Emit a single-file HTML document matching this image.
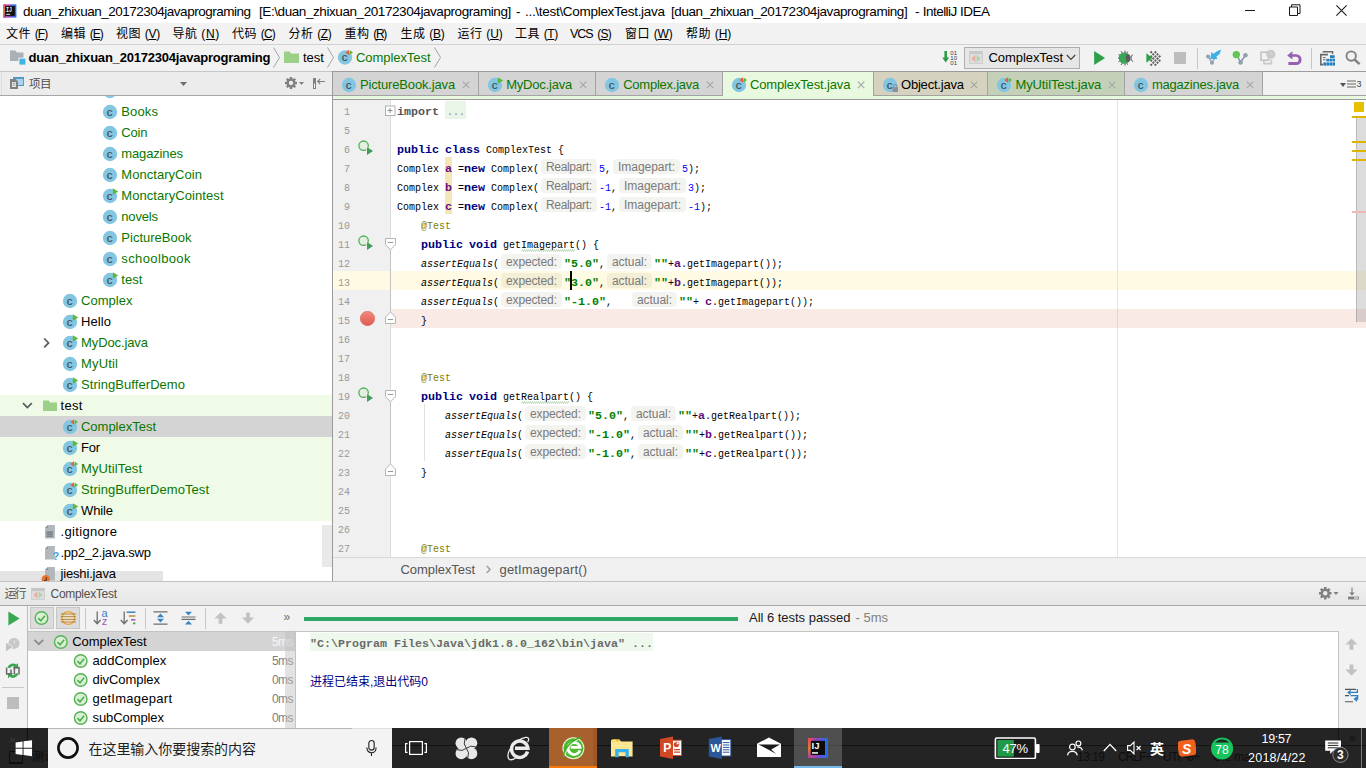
<!DOCTYPE html>
<html lang="zh-CN"><head><meta charset="utf-8"><title>IntelliJ IDEA - ComplexTest.java</title>
<style>
html,body{margin:0;padding:0;}
body{width:1366px;height:768px;overflow:hidden;background:#f2f2f2;position:relative;
 font-family:"Liberation Sans","Noto Sans CJK SC",sans-serif;font-size:13px;color:#000;}
#app{position:absolute;left:0;top:0;width:1366px;height:768px;overflow:hidden;}
#app div,#app span,#app svg{position:absolute;}
#app span{white-space:pre;}
#app span.c{font-family:"Liberation Mono","Noto Sans CJK SC",monospace;transform-origin:0 0;}
#app u{text-decoration:underline;text-underline-offset:1px;}
</style></head>
<body><div id="app">
<div style="left:0px;top:0px;width:1366px;height:23px;background:#ffffff;"></div>
<svg style="left:3px;top:4px;" width="14" height="14" viewBox="-0.4 -0.4 14 14"><defs><linearGradient id="ijg" x1="0" y1="0" x2="1" y2="0"><stop offset="0" stop-color="#f03e6a"/><stop offset="0.45" stop-color="#8a46c8"/><stop offset="1" stop-color="#1673ee"/></linearGradient><linearGradient id="ijh" x1="0" y1="0" x2="0" y2="1"><stop offset="0" stop-color="#f03e6a"/><stop offset="0.5" stop-color="#e07b28"/><stop offset="1" stop-color="#a041b0"/></linearGradient></defs><rect x="0" y="0" width="13" height="13.2" fill="url(#ijg)"/><rect x="0" y="0" width="2.6" height="13.2" fill="url(#ijh)"/><rect x="1.7" y="1.7" width="9.8" height="9.8" fill="#0f0f0f"/><rect x="2.8" y="9.4" width="4" height="1" fill="#e8e8e8"/><text x="2.5" y="7.7" font-family="Liberation Mono,monospace" font-weight="700" font-size="6.4" fill="#f2f2f2" textLength="6" lengthAdjust="spacingAndGlyphs">IJ</text></svg>
<span style="left:23px;top:3.25px;line-height:17.5px;font-size:13.5px;letter-spacing:-0.491px;">duan_zhixuan_20172304javaprograming </span>
<span style="left:259px;top:3.25px;line-height:17.5px;font-size:13.5px;letter-spacing:-0.421px;">[E:\duan_zhixuan_20172304javaprograming] </span>
<span style="left:516px;top:3.25px;line-height:17.5px;font-size:13.5px;letter-spacing:-0.500px;">- </span>
<span style="left:525px;top:3.25px;line-height:17.5px;font-size:13.5px;letter-spacing:-0.294px;">...\test\ComplexTest.java </span>
<span style="left:671px;top:3.25px;line-height:17.5px;font-size:13.5px;letter-spacing:-0.431px;">[duan_zhixuan_20172304javaprograming] </span>
<span style="left:915px;top:3.25px;line-height:17.5px;font-size:13.5px;">- </span>
<span style="left:922.7px;top:3.25px;line-height:17.5px;font-size:13.5px;letter-spacing:-0.519px;">IntelliJ IDEA</span>
<div style="left:1245px;top:10px;width:10px;height:1px;background:#1a1a1a;"></div>
<svg style="left:1289px;top:4px;" width="12" height="12" viewBox="0 0 12 12"><path d="M0.5 3 h8 v8.5 h-8 Z" fill="none" stroke="#1a1a1a" stroke-width="1"/><path d="M2.5 3 V0.8 h8.5 V9.5 H8.5" fill="none" stroke="#1a1a1a" stroke-width="1"/></svg>
<svg style="left:1336px;top:5px;" width="11" height="11" viewBox="0 0 11 11"><path d="M0.4 0.4 L10.6 10.6 M10.6 0.4 L0.4 10.6" stroke="#1a1a1a" stroke-width="1.1" fill="none"/></svg>
<div style="left:0px;top:23px;width:1366px;height:22px;background:#f2f2f2;"></div>
<span style="left:6px;top:26.3px;line-height:16px;font-size:12px;letter-spacing:0.584px;">文件 </span>
<span style="left:34.7px;top:26.3px;line-height:16px;font-size:12px;letter-spacing:-0.864px;">(<u>F</u>)</span>
<span style="left:61px;top:26.3px;line-height:16px;font-size:12px;letter-spacing:0.584px;">编辑 </span>
<span style="left:89.7px;top:26.3px;line-height:16px;font-size:12px;letter-spacing:-0.950px;">(<u>E</u>)</span>
<span style="left:116px;top:26.3px;line-height:16px;font-size:12px;letter-spacing:0.584px;">视图 </span>
<span style="left:144.7px;top:26.3px;line-height:16px;font-size:12px;letter-spacing:-0.200px;">(<u>V</u>)</span>
<span style="left:172.5px;top:26.3px;line-height:16px;font-size:12px;letter-spacing:0.584px;">导航 </span>
<span style="left:201.2px;top:26.3px;line-height:16px;font-size:12px;letter-spacing:0.714px;">(<u>N</u>)</span>
<span style="left:232px;top:26.3px;line-height:16px;font-size:12px;letter-spacing:0.584px;">代码 </span>
<span style="left:260.7px;top:26.3px;line-height:16px;font-size:12px;letter-spacing:-0.786px;">(<u>C</u>)</span>
<span style="left:288.5px;top:26.3px;line-height:16px;font-size:12px;letter-spacing:0.584px;">分析 </span>
<span style="left:317.2px;top:26.3px;line-height:16px;font-size:12px;letter-spacing:-0.364px;">(<u>Z</u>)</span>
<span style="left:344.5px;top:26.3px;line-height:16px;font-size:12px;letter-spacing:0.584px;">重构 </span>
<span style="left:373.2px;top:26.3px;line-height:16px;font-size:12px;letter-spacing:-1.286px;">(<u>R</u>)</span>
<span style="left:400.5px;top:26.3px;line-height:16px;font-size:12px;letter-spacing:0.584px;">生成 </span>
<span style="left:429.2px;top:26.3px;line-height:16px;font-size:12px;letter-spacing:-0.200px;">(<u>B</u>)</span>
<span style="left:457.5px;top:26.3px;line-height:16px;font-size:12px;letter-spacing:0.584px;">运行 </span>
<span style="left:486.2px;top:26.3px;line-height:16px;font-size:12px;letter-spacing:-0.036px;">(<u>U</u>)</span>
<span style="left:515px;top:26.3px;line-height:16px;font-size:12px;letter-spacing:0.584px;">工具 </span>
<span style="left:543.7px;top:26.3px;line-height:16px;font-size:12px;letter-spacing:-0.364px;">(<u>T</u>)</span>
<span style="left:570px;top:26.05px;line-height:16.5px;font-size:12.5px;letter-spacing:-1.052px;">VCS </span>
<span style="left:597.3px;top:26.3px;line-height:16px;font-size:12px;letter-spacing:-0.750px;">(<u>S</u>)</span>
<span style="left:625px;top:26.3px;line-height:16px;font-size:12px;letter-spacing:0.584px;">窗口 </span>
<span style="left:653.7px;top:26.3px;line-height:16px;font-size:12px;letter-spacing:-0.114px;">(<u>W</u>)</span>
<span style="left:686px;top:26.3px;line-height:16px;font-size:12px;letter-spacing:0.584px;">帮助 </span>
<span style="left:714.7px;top:26.3px;line-height:16px;font-size:12px;letter-spacing:-0.036px;">(<u>H</u>)</span>
<div style="left:0px;top:44px;width:1366px;height:1px;background:#d1d1d1;"></div>
<div style="left:0px;top:45px;width:1366px;height:26px;background:#f2f2f2;"></div>
<svg style="left:10px;top:50px;" width="16" height="15" viewBox="0 0 16 15"><path d="M0 0.5 h5.4 l1.6 2 H13.5 V11 H0 Z" fill="#aab0b6"/><rect x="8.4" y="7.6" width="7" height="7" fill="#f2f2f2"/><rect x="9.4" y="8.6" width="6" height="6" fill="#40b6e0"/></svg>
<span style="left:28.5px;top:49.0px;line-height:17px;font-size:13px;font-weight:700;letter-spacing:-0.214px;">duan_zhixuan_20172304javaprograming</span>
<svg style="left:273px;top:47px;" width="7" height="21" viewBox="0 0 7 21"><path d="M0.5 0.5 L6.5 10.5 L0.5 20.5" fill="none" stroke="#a3a3a3" stroke-width="1"/></svg>
<svg style="left:284px;top:51px;" width="15" height="12" viewBox="0 0 15 12"><path d="M0 0.5 h5.6 l1.6 2 H15 V12 H0 Z" fill="#9cd088"/></svg>
<span style="left:303px;top:49.0px;line-height:17px;font-size:13px;letter-spacing:0.010px;">test</span>
<svg style="left:327px;top:47px;" width="7" height="21" viewBox="0 0 7 21"><path d="M0.5 0.5 L6.5 10.5 L0.5 20.5" fill="none" stroke="#a3a3a3" stroke-width="1"/></svg>
<svg style="left:337px;top:48px;" width="17" height="18" viewBox="0 -0.5 17 18"><circle cx="8" cy="9" r="7.15" fill="#83c6e2"/><text x="7.7" y="12.6" text-anchor="middle" font-family="Liberation Sans,sans-serif" font-weight="400" font-size="11.5" stroke="#3f4a54" stroke-width="0.2" fill="#3f4a54">c</text><path d="M12.6 1.4 L12.6 6.6 L16 4 Z" fill="#5ab83c"/><path d="M12 1.2 L12 6.8 L8.4 4 Z" fill="#e8603c"/></svg>
<span style="left:356px;top:49.0px;line-height:17px;font-size:13px;color:#0a7700;letter-spacing:-0.064px;">ComplexTest</span>
<svg style="left:434px;top:47px;" width="7" height="21" viewBox="0 0 7 21"><path d="M0.5 0.5 L6.5 10.5 L0.5 20.5" fill="none" stroke="#a3a3a3" stroke-width="1"/></svg>
<svg style="left:942px;top:51px;" width="8" height="12" viewBox="-0.2 0 8 12"><path d="M2.2 0 h2.6 v6.4 h2.2 L3.5 11.6 L0 6.4 h2.2 Z" fill="#2f9a4a"/></svg>
<span style="left:950.3px;top:49.5px;line-height:6px;font-size:6px;color:#3c3c3c;font-family:"Liberation Mono","Noto Sans CJK SC",monospace;letter-spacing:-0.203px;">01</span>
<span style="left:950.3px;top:54.5px;line-height:6px;font-size:6px;color:#3c3c3c;font-family:"Liberation Mono","Noto Sans CJK SC",monospace;letter-spacing:-0.203px;">10</span>
<span style="left:950.3px;top:59.5px;line-height:6px;font-size:6px;color:#3c3c3c;font-family:"Liberation Mono","Noto Sans CJK SC",monospace;letter-spacing:-0.203px;">01</span>
<div style="left:964px;top:47px;width:116px;height:22px;background:#e6e6e6;border:1px solid #adadad;box-sizing:border-box;"></div>
<div style="left:969px;top:51px;width:14px;height:13px;background:#dcdcdc;border:1px solid #cfcfcf;border-top:3px solid #c9c9c9;box-sizing:border-box;"></div>
<svg style="left:971px;top:54px;" width="10" height="9" viewBox="0 -0.5 10 9"><path d="M4.4 0.6 V7.4 L0.4 4 Z" fill="#efaaa0"/><path d="M5.6 0.6 V7.4 L9.6 4 Z" fill="#a9d6a9"/></svg>
<span style="left:988.5px;top:49.0px;line-height:17px;font-size:13px;letter-spacing:-0.064px;">ComplexTest</span>
<svg style="left:1066px;top:54px;" width="10" height="7" viewBox="0 0 10 7"><path d="M0.8 1 L5 5.4 L9.2 1" fill="none" stroke="#444" stroke-width="1.2"/></svg>
<svg style="left:1093px;top:50px;" width="14" height="16" viewBox="-0.5 -0.5 14 16"><path d="M0.6 0.6 L11.6 7.5 L0.6 14.4 Z" fill="#2fa04a"/></svg>
<svg style="left:1118px;top:50px;" width="16" height="16" viewBox="0 0 16 16"><path d="M3 1.2 L4.8 3.6 M7 0.6 V3 M0.6 4.6 L2.6 5.8 M0 8 H1.6 M0.6 11.6 L2.6 10.4 M3 15 L4.8 12.6 M7 15.6 V13.2 M9.6 1.6 L8.6 3.4 M9.6 14.6 L8.6 12.8" stroke="#555" stroke-width="1" fill="none"/><path d="M9.8 3.6 A5.6 5.4 0 1 0 9.8 12.6 A6.4 6.4 0 0 1 9.8 3.6 Z" fill="#3aa655"/><ellipse cx="5.4" cy="8.1" rx="4.6" ry="5.3" fill="#3aa655"/><path d="M9.6 3.4 A6.6 6.6 0 0 0 9.6 12.8 A7 5 0 0 0 12.6 8.1 A7 5 0 0 0 9.6 3.4 Z" fill="#5d5d5d"/><path d="M14.8 4.6 A4.4 4.4 0 0 0 14.8 11.6" stroke="#777" stroke-width="1.1" fill="none"/></svg>
<svg style="left:1146px;top:50px;" width="16" height="16" viewBox="0 0 16 16"><g fill="#5f5f5f"><rect x="4.2" y="1.2" width="2" height="2" transform="rotate(45 5.2 2.2)"/><rect x="4.2" y="5.4" width="2" height="2" transform="rotate(45 5.2 6.4)"/><rect x="4.2" y="9.6" width="2" height="2" transform="rotate(45 5.2 10.6)"/><rect x="4.2" y="13.8" width="2" height="2" transform="rotate(45 5.2 14.8)"/><rect x="6.3" y="3.3" width="2" height="2" transform="rotate(45 7.3 4.3)"/><rect x="6.3" y="7.5" width="2" height="2" transform="rotate(45 7.3 8.5)"/><rect x="6.3" y="11.7" width="2" height="2" transform="rotate(45 7.3 12.7)"/><rect x="8.4" y="1.2" width="2" height="2" transform="rotate(45 9.4 2.2)"/><rect x="8.4" y="5.4" width="2" height="2" transform="rotate(45 9.4 6.4)"/><rect x="8.4" y="9.6" width="2" height="2" transform="rotate(45 9.4 10.6)"/><rect x="8.4" y="13.8" width="2" height="2" transform="rotate(45 9.4 14.8)"/><rect x="10.5" y="3.3" width="2" height="2" transform="rotate(45 11.5 4.3)"/><rect x="10.5" y="7.5" width="2" height="2" transform="rotate(45 11.5 8.5)"/><rect x="10.5" y="11.7" width="2" height="2" transform="rotate(45 11.5 12.7)"/><rect x="12.6" y="5.4" width="2" height="2" transform="rotate(45 13.6 6.4)"/><rect x="12.6" y="9.6" width="2" height="2" transform="rotate(45 13.6 10.6)"/></g><path d="M0.4 3.2 L6.4 8 L0.4 12.8 Z" fill="#2fa04a"/></svg>
<div style="left:1174px;top:52px;width:12px;height:12px;background:#bdbdbd;"></div>
<div style="left:1197px;top:48px;width:1px;height:21px;background:#c4c4c4;"></div>
<svg style="left:1205px;top:49px;" width="17" height="17" viewBox="0 0 17 17"><path d="M3.2 7.6 L7 13.6 L10 9" stroke="#8fa1b0" stroke-width="1.3" fill="none"/><circle cx="3" cy="7.6" r="2" fill="#8fa1b0"/><circle cx="7" cy="13.8" r="2" fill="#8fa1b0"/><path d="M16.2 0.6 L14.6 5 L11.4 7.4 L12.4 10 L5.2 10 L6.4 3 L8.6 4.8 L11.6 2.4 Z" fill="#3fb0e4"/></svg>
<svg style="left:1232px;top:49px;" width="17" height="17" viewBox="0 0 17 17"><path d="M4.6 6 L8.6 13 L13.4 6.4" stroke="#7f93a3" stroke-width="1.5" fill="none"/><circle cx="4.3" cy="5.6" r="3.7" fill="#62c554"/><circle cx="13.4" cy="6.3" r="2.3" fill="#8fa1b0"/><circle cx="8.6" cy="13.4" r="2.3" fill="#8fa1b0"/></svg>
<svg style="left:1260px;top:49px;" width="17" height="17" viewBox="0 0 17 17"><rect x="1" y="3.2" width="7.6" height="8" fill="none" stroke="#c2c2c2" stroke-width="1.6"/><path d="M4 11.6 V14.6 H11.4 V10.4" stroke="#c8c8c8" stroke-width="1.6" fill="none"/><circle cx="10.8" cy="5.2" r="4.5" fill="#c9c9c9"/><path d="M10.8 2.4 V5.2 h2.4" stroke="#dedede" stroke-width="0.9" fill="none"/></svg>
<svg style="left:1287px;top:51px;" width="15" height="15" viewBox="0 0 15 15"><path d="M5.4 0.2 L0.2 4.4 L5.4 8.6 V5.8 H9 a2.6 2.6 0 0 1 0 5.2 H1.4 V14 H9.2 a5.4 5.4 0 0 0 0 -10.8 H5.4 Z" fill="#9460b4"/></svg>
<div style="left:1311px;top:48px;width:1px;height:21px;background:#c4c4c4;"></div>
<svg style="left:1320px;top:50px;" width="15" height="17" viewBox="0 0 15 17"><path d="M2.6 1.8 H12.6 V4" fill="none" stroke="#6a6a6a" stroke-width="1.4"/><path d="M8 4.6 H0.8 V14.6 H3" fill="none" stroke="#6a6a6a" stroke-width="1.6"/><path d="M3 7.6 H5.6 M3 9.8 H5.6" stroke="#555" stroke-width="0.9"/><g fill="#1f7fc0"><rect x="10" y="5.2" width="4.6" height="3"/><rect x="6.4" y="8.8" width="2.6" height="2.6"/><rect x="9.4" y="8.8" width="2.6" height="2.6"/><rect x="12.4" y="8.8" width="2.6" height="2.6"/><rect x="3.4" y="12.4" width="2.6" height="3.2"/><rect x="6.4" y="12.4" width="2.6" height="3.2"/><rect x="9.4" y="12.4" width="2.6" height="3.2"/><rect x="12.4" y="12.4" width="2.6" height="3.2"/></g></svg>
<svg style="left:1345px;top:50px;" width="16" height="16" viewBox="0 0 16 16"><circle cx="6.2" cy="6.1" r="4.7" fill="none" stroke="#808080" stroke-width="1.9"/><path d="M9.6 9.6 L14.6 14.2" stroke="#808080" stroke-width="2.4"/></svg>
<div style="left:0px;top:71px;width:332px;height:1px;background:#c6c6c6;"></div>
<div style="left:332px;top:71px;width:1034px;height:1px;background:#9b9b9b;"></div>
<div style="left:0px;top:72px;width:332px;height:23px;background:#ececec;"></div>
<div style="left:1px;top:72px;width:1px;height:23px;background:#dcdcdc;"></div>
<svg style="left:10px;top:77px;" width="14" height="12" viewBox="0 0 14 12"><rect x="3.6" y="0.5" width="10" height="8" fill="#a9d5ef" stroke="#4d9bc6" stroke-width="1"/><rect x="3.6" y="0.4" width="10" height="1.6" fill="#4d9bc6"/><path d="M0 2 H5.6 L8 4.4 V12 H0 Z" fill="#808080"/><path d="M2.2 5 H5.8 V10 H2.2 Z" fill="#f4f4f4"/><path d="M3 6.2 H5 M3 8.2 H5" stroke="#808080" stroke-width="0.9"/></svg>
<span style="left:29px;top:76.85px;line-height:15.5px;font-size:11.5px;color:#4d4d4d;letter-spacing:-0.500px;">项目</span>
<svg style="left:180px;top:82px;" width="7" height="4" viewBox="0 0 7 4"><path d="M0 0 H7 L3.5 4 Z" fill="#6e6e6e"/></svg>
<svg style="left:285px;top:77px;" width="12" height="12" viewBox="0 0 12 12"><line x1="9.60" y1="6.00" x2="12.00" y2="6.00" stroke="#808080" stroke-width="2.40"/><line x1="8.55" y1="8.55" x2="10.24" y2="10.24" stroke="#808080" stroke-width="2.40"/><line x1="6.00" y1="9.60" x2="6.00" y2="12.00" stroke="#808080" stroke-width="2.40"/><line x1="3.45" y1="8.55" x2="1.76" y2="10.24" stroke="#808080" stroke-width="2.40"/><line x1="2.40" y1="6.00" x2="0.00" y2="6.00" stroke="#808080" stroke-width="2.40"/><line x1="3.45" y1="3.45" x2="1.76" y2="1.76" stroke="#808080" stroke-width="2.40"/><line x1="6.00" y1="2.40" x2="6.00" y2="0.00" stroke="#808080" stroke-width="2.40"/><line x1="8.55" y1="3.45" x2="10.24" y2="1.76" stroke="#808080" stroke-width="2.40"/><circle cx="6.0" cy="6.0" r="3.36" fill="none" stroke="#808080" stroke-width="2.40"/></svg>
<svg style="left:299px;top:82px;" width="5" height="3" viewBox="0 0 5 3"><path d="M0 0 H5 L2.5 3 Z" fill="#808080"/></svg>
<svg style="left:313px;top:78px;" width="14" height="12" viewBox="0 0 14 12"><rect x="0" y="0" width="3" height="11" fill="#808080"/><rect x="1" y="5.6" width="1" height="4.4" fill="#f4f4f4"/><path d="M4.6 3.5 H12 M7.2 1 L4.6 3.5 L7.2 6" fill="none" stroke="#808080" stroke-width="1.1"/></svg>
<div style="left:0px;top:95px;width:332px;height:1px;background:#a6a6a6;"></div>
<div style="left:333px;top:72px;width:1033px;height:23px;background:#f2f2f2;"></div>
<div style="left:333px;top:72px;width:146px;height:23px;background:#d4d4d4;"></div>
<div style="left:478px;top:72px;width:1px;height:23px;background:#a3a3a3;"></div>
<svg style="left:341px;top:76px;" width="17" height="17" viewBox="0 0 17 17"><circle cx="8" cy="9" r="7.15" fill="#83c6e2"/><text x="7.7" y="12.6" text-anchor="middle" font-family="Liberation Sans,sans-serif" font-weight="400" font-size="11.5" stroke="#3f4a54" stroke-width="0.2" fill="#3f4a54">c</text></svg>
<span style="left:360px;top:76.0px;line-height:17px;font-size:13px;color:#0a7700;letter-spacing:-0.158px;">PictureBook.java</span>
<svg style="left:462px;top:81px;" width="8" height="8" viewBox="-0.4 -0.2 8 8"><path d="M0.5 0.5 L6.9 6.9 M6.9 0.5 L0.5 6.9" fill="none" stroke="#a3a8a6" stroke-width="1.1"/></svg>
<div style="left:479px;top:72px;width:117px;height:23px;background:#d4d4d4;"></div>
<div style="left:595px;top:72px;width:1px;height:23px;background:#a3a3a3;"></div>
<svg style="left:487px;top:76px;" width="17" height="17" viewBox="0 0 17 17"><circle cx="8" cy="9" r="7.15" fill="#83c6e2"/><text x="7.7" y="12.6" text-anchor="middle" font-family="Liberation Sans,sans-serif" font-weight="400" font-size="11.5" stroke="#3f4a54" stroke-width="0.2" fill="#3f4a54">c</text><path d="M9.5 0.5 L9.5 8 L15.5 4.2 Z" fill="#f2f2f2" fill-opacity="0"/><path d="M10.8 1.2 L10.8 7.8 L16.2 4.5 Z" fill="#5ab83c"/></svg>
<span style="left:506.2px;top:76.0px;line-height:17px;font-size:13px;color:#0a7700;letter-spacing:-0.214px;">MyDoc.java</span>
<svg style="left:579px;top:81px;" width="8" height="8" viewBox="-0.4 -0.2 8 8"><path d="M0.5 0.5 L6.9 6.9 M6.9 0.5 L0.5 6.9" fill="none" stroke="#a3a8a6" stroke-width="1.1"/></svg>
<div style="left:596px;top:72px;width:127px;height:23px;background:#d4d4d4;"></div>
<div style="left:722px;top:72px;width:1px;height:23px;background:#a3a3a3;"></div>
<svg style="left:604px;top:76px;" width="17" height="17" viewBox="0 0 17 17"><circle cx="8" cy="9" r="7.15" fill="#83c6e2"/><text x="7.7" y="12.6" text-anchor="middle" font-family="Liberation Sans,sans-serif" font-weight="400" font-size="11.5" stroke="#3f4a54" stroke-width="0.2" fill="#3f4a54">c</text></svg>
<span style="left:623.2px;top:76.0px;line-height:17px;font-size:13px;color:#0a7700;letter-spacing:-0.242px;">Complex.java</span>
<svg style="left:706px;top:81px;" width="8" height="8" viewBox="-0.4 -0.2 8 8"><path d="M0.5 0.5 L6.9 6.9 M6.9 0.5 L0.5 6.9" fill="none" stroke="#a3a8a6" stroke-width="1.1"/></svg>
<div style="left:723px;top:72px;width:151px;height:23px;background:#e9f9df;"></div>
<div style="left:873px;top:72px;width:1px;height:23px;background:#a3a3a3;"></div>
<svg style="left:731px;top:76px;" width="17" height="17" viewBox="0 0 17 17"><circle cx="8" cy="9" r="7.15" fill="#83c6e2"/><text x="7.7" y="12.6" text-anchor="middle" font-family="Liberation Sans,sans-serif" font-weight="400" font-size="11.5" stroke="#3f4a54" stroke-width="0.2" fill="#3f4a54">c</text><path d="M12.6 1.4 L12.6 6.6 L16 4 Z" fill="#5ab83c"/><path d="M12 1.2 L12 6.8 L8.4 4 Z" fill="#e8603c"/></svg>
<span style="left:750px;top:76.0px;line-height:17px;font-size:13px;color:#0a7700;letter-spacing:-0.147px;">ComplexTest.java</span>
<svg style="left:857px;top:81px;" width="8" height="8" viewBox="-0.4 -0.2 8 8"><path d="M0.5 0.5 L6.9 6.9 M6.9 0.5 L0.5 6.9" fill="none" stroke="#a3a8a6" stroke-width="1.1"/></svg>
<div style="left:874px;top:72px;width:114px;height:23px;background:#d5d3bf;"></div>
<div style="left:987px;top:72px;width:1px;height:23px;background:#a3a3a3;"></div>
<svg style="left:882px;top:76px;" width="17" height="17" viewBox="0 0 17 17"><circle cx="8" cy="9" r="7.15" fill="#83c6e2"/><text x="7.7" y="12.6" text-anchor="middle" font-family="Liberation Sans,sans-serif" font-weight="400" font-size="11.5" stroke="#3f4a54" stroke-width="0.2" fill="#3f4a54">c</text><rect x="10.5" y="11.2" width="5.5" height="4.8" fill="#8a8f99"/><path d="M11.6 11.4 v-1.3 a1.65 1.65 0 0 1 3.3 0 v1.3" fill="none" stroke="#8a8f99" stroke-width="1.1"/></svg>
<span style="left:901px;top:76.0px;line-height:17px;font-size:13px;letter-spacing:-0.205px;">Object.java</span>
<svg style="left:970px;top:81px;" width="8" height="8" viewBox="-0.4 -0.2 8 8"><path d="M0.5 0.5 L6.9 6.9 M6.9 0.5 L0.5 6.9" fill="none" stroke="#a3a8a6" stroke-width="1.1"/></svg>
<div style="left:988px;top:72px;width:137px;height:23px;background:#c4d0b8;"></div>
<div style="left:1124px;top:72px;width:1px;height:23px;background:#a3a3a3;"></div>
<svg style="left:996px;top:76px;" width="17" height="17" viewBox="0 0 17 17"><circle cx="8" cy="9" r="7.15" fill="#83c6e2"/><text x="7.7" y="12.6" text-anchor="middle" font-family="Liberation Sans,sans-serif" font-weight="400" font-size="11.5" stroke="#3f4a54" stroke-width="0.2" fill="#3f4a54">c</text><path d="M12.6 1.4 L12.6 6.6 L16 4 Z" fill="#5ab83c"/><path d="M12 1.2 L12 6.8 L8.4 4 Z" fill="#e8603c"/></svg>
<span style="left:1015.5px;top:76.0px;line-height:17px;font-size:13px;color:#0a7700;letter-spacing:-0.116px;">MyUtilTest.java</span>
<svg style="left:1108px;top:81px;" width="8" height="8" viewBox="-0.4 -0.2 8 8"><path d="M0.5 0.5 L6.9 6.9 M6.9 0.5 L0.5 6.9" fill="none" stroke="#a3a8a6" stroke-width="1.1"/></svg>
<div style="left:1125px;top:72px;width:138px;height:23px;background:#d4d4d4;"></div>
<div style="left:1262px;top:72px;width:1px;height:23px;background:#a3a3a3;"></div>
<svg style="left:1133px;top:76px;" width="17" height="17" viewBox="0 0 17 17"><circle cx="8" cy="9" r="7.15" fill="#83c6e2"/><text x="7.7" y="12.6" text-anchor="middle" font-family="Liberation Sans,sans-serif" font-weight="400" font-size="11.5" stroke="#3f4a54" stroke-width="0.2" fill="#3f4a54">c</text></svg>
<span style="left:1152px;top:76.0px;line-height:17px;font-size:13px;color:#0a7700;letter-spacing:-0.233px;">magazines.java</span>
<svg style="left:1246px;top:81px;" width="8" height="8" viewBox="-0.4 -0.2 8 8"><path d="M0.5 0.5 L6.9 6.9 M6.9 0.5 L0.5 6.9" fill="none" stroke="#a3a8a6" stroke-width="1.1"/></svg>
<svg style="left:1340px;top:83px;" width="6" height="4" viewBox="0 0 6 4"><path d="M0 0 H6 L3.0 4 Z" fill="#555"/></svg>
<svg style="left:1347px;top:80px;" width="9" height="9" viewBox="0 0 9 9"><path d="M0 1 H9 M0 4 H9 M0 7 H9" stroke="#666" stroke-width="1"/></svg>
<span style="left:1356.5px;top:78.0px;line-height:13px;font-size:9px;color:#444;letter-spacing:-0.516px;">3</span>
<div style="left:333px;top:95px;width:1033px;height:1px;background:#a3a3a3;"></div>
<div style="left:723px;top:95px;width:150px;height:1px;background:#e9f9df;"></div>
<div style="left:333px;top:96px;width:1033px;height:3px;background:#e9f9df;"></div>
<div style="left:333px;top:99px;width:1033px;height:1px;background:#9b9b9b;"></div>
<div style="left:0px;top:96px;width:332px;height:485px;background:#ffffff;overflow:hidden;"></div>
<div style="left:332px;top:72px;width:1px;height:509px;background:#9b9b9b;"></div>
<div style="left:0;top:96px;width:332px;height:4px;overflow:hidden"><svg style="left:102px;top:-14px;" width="17" height="17" viewBox="0 0 17 17"><circle cx="8" cy="9" r="7.15" fill="#83c6e2"/><text x="7.7" y="12.6" text-anchor="middle" font-family="Liberation Sans,sans-serif" font-weight="400" font-size="11.5" stroke="#3f4a54" stroke-width="0.2" fill="#3f4a54">c</text></svg></div>
<div style="left:322px;top:525px;width:10px;height:42px;background:#e9e9e9;"></div>
<div style="left:0px;top:571px;width:163px;height:10px;background:#e4e4e4;"></div>
<svg style="left:102px;top:103px;" width="17" height="17" viewBox="0 0 17 17"><circle cx="8" cy="9" r="7.15" fill="#83c6e2"/><text x="7.7" y="12.6" text-anchor="middle" font-family="Liberation Sans,sans-serif" font-weight="400" font-size="11.5" stroke="#3f4a54" stroke-width="0.2" fill="#3f4a54">c</text></svg>
<span style="left:121.3px;top:103.0px;line-height:17px;font-size:13px;color:#0a7700;letter-spacing:0.140px;">Books</span>
<svg style="left:102px;top:124px;" width="17" height="17" viewBox="0 0 17 17"><circle cx="8" cy="9" r="7.15" fill="#83c6e2"/><text x="7.7" y="12.6" text-anchor="middle" font-family="Liberation Sans,sans-serif" font-weight="400" font-size="11.5" stroke="#3f4a54" stroke-width="0.2" fill="#3f4a54">c</text></svg>
<span style="left:121.3px;top:124.0px;line-height:17px;font-size:13px;color:#0a7700;letter-spacing:-0.183px;">Coin</span>
<svg style="left:102px;top:145px;" width="17" height="17" viewBox="0 0 17 17"><circle cx="8" cy="9" r="7.15" fill="#83c6e2"/><text x="7.7" y="12.6" text-anchor="middle" font-family="Liberation Sans,sans-serif" font-weight="400" font-size="11.5" stroke="#3f4a54" stroke-width="0.2" fill="#3f4a54">c</text></svg>
<span style="left:121.3px;top:145.0px;line-height:17px;font-size:13px;color:#0a7700;letter-spacing:-0.147px;">magazines</span>
<svg style="left:102px;top:166px;" width="17" height="17" viewBox="0 0 17 17"><circle cx="8" cy="9" r="7.15" fill="#83c6e2"/><text x="7.7" y="12.6" text-anchor="middle" font-family="Liberation Sans,sans-serif" font-weight="400" font-size="11.5" stroke="#3f4a54" stroke-width="0.2" fill="#3f4a54">c</text></svg>
<span style="left:121.3px;top:166.0px;line-height:17px;font-size:13px;color:#0a7700;letter-spacing:0.045px;">MonctaryCoin</span>
<svg style="left:102px;top:187px;" width="17" height="17" viewBox="0 0 17 17"><circle cx="8" cy="9" r="7.15" fill="#83c6e2"/><text x="7.7" y="12.6" text-anchor="middle" font-family="Liberation Sans,sans-serif" font-weight="400" font-size="11.5" stroke="#3f4a54" stroke-width="0.2" fill="#3f4a54">c</text><path d="M9.5 0.5 L9.5 8 L15.5 4.2 Z" fill="#f2f2f2" fill-opacity="0"/><path d="M10.8 1.2 L10.8 7.8 L16.2 4.5 Z" fill="#5ab83c"/></svg>
<span style="left:121.3px;top:187.0px;line-height:17px;font-size:13px;color:#0a7700;letter-spacing:0.070px;">MonctaryCointest</span>
<svg style="left:102px;top:208px;" width="17" height="17" viewBox="0 0 17 17"><circle cx="8" cy="9" r="7.15" fill="#83c6e2"/><text x="7.7" y="12.6" text-anchor="middle" font-family="Liberation Sans,sans-serif" font-weight="400" font-size="11.5" stroke="#3f4a54" stroke-width="0.2" fill="#3f4a54">c</text></svg>
<span style="left:121.3px;top:208.0px;line-height:17px;font-size:13px;color:#0a7700;letter-spacing:-0.176px;">novels</span>
<svg style="left:102px;top:229px;" width="17" height="17" viewBox="0 0 17 17"><circle cx="8" cy="9" r="7.15" fill="#83c6e2"/><text x="7.7" y="12.6" text-anchor="middle" font-family="Liberation Sans,sans-serif" font-weight="400" font-size="11.5" stroke="#3f4a54" stroke-width="0.2" fill="#3f4a54">c</text></svg>
<span style="left:121.3px;top:229.0px;line-height:17px;font-size:13px;color:#0a7700;letter-spacing:0.011px;">PictureBook</span>
<svg style="left:102px;top:250px;" width="17" height="17" viewBox="0 0 17 17"><circle cx="8" cy="9" r="7.15" fill="#83c6e2"/><text x="7.7" y="12.6" text-anchor="middle" font-family="Liberation Sans,sans-serif" font-weight="400" font-size="11.5" stroke="#3f4a54" stroke-width="0.2" fill="#3f4a54">c</text></svg>
<span style="left:121.3px;top:250.0px;line-height:17px;font-size:13px;color:#0a7700;letter-spacing:0.380px;">schoolbook</span>
<svg style="left:102px;top:271px;" width="17" height="17" viewBox="0 0 17 17"><circle cx="8" cy="9" r="7.15" fill="#83c6e2"/><text x="7.7" y="12.6" text-anchor="middle" font-family="Liberation Sans,sans-serif" font-weight="400" font-size="11.5" stroke="#3f4a54" stroke-width="0.2" fill="#3f4a54">c</text><path d="M9.5 0.5 L9.5 8 L15.5 4.2 Z" fill="#f2f2f2" fill-opacity="0"/><path d="M10.8 1.2 L10.8 7.8 L16.2 4.5 Z" fill="#5ab83c"/></svg>
<span style="left:121.3px;top:271.0px;line-height:17px;font-size:13px;color:#0a7700;letter-spacing:0.077px;">test</span>
<svg style="left:62px;top:292px;" width="17" height="17" viewBox="0 0 17 17"><circle cx="8" cy="9" r="7.15" fill="#83c6e2"/><text x="7.7" y="12.6" text-anchor="middle" font-family="Liberation Sans,sans-serif" font-weight="400" font-size="11.5" stroke="#3f4a54" stroke-width="0.2" fill="#3f4a54">c</text></svg>
<span style="left:81px;top:292.0px;line-height:17px;font-size:13px;color:#0a7700;letter-spacing:0.034px;">Complex</span>
<svg style="left:62px;top:313px;" width="17" height="17" viewBox="0 0 17 17"><circle cx="8" cy="9" r="7.15" fill="#83c6e2"/><text x="7.7" y="12.6" text-anchor="middle" font-family="Liberation Sans,sans-serif" font-weight="400" font-size="11.5" stroke="#3f4a54" stroke-width="0.2" fill="#3f4a54">c</text><path d="M9.5 0.5 L9.5 8 L15.5 4.2 Z" fill="#f2f2f2" fill-opacity="0"/><path d="M10.8 1.2 L10.8 7.8 L16.2 4.5 Z" fill="#5ab83c"/></svg>
<span style="left:81px;top:313.0px;line-height:17px;font-size:13px;letter-spacing:0.094px;">Hello</span>
<svg style="left:62px;top:334px;" width="17" height="17" viewBox="0 0 17 17"><circle cx="8" cy="9" r="7.15" fill="#83c6e2"/><text x="7.7" y="12.6" text-anchor="middle" font-family="Liberation Sans,sans-serif" font-weight="400" font-size="11.5" stroke="#3f4a54" stroke-width="0.2" fill="#3f4a54">c</text><path d="M9.5 0.5 L9.5 8 L15.5 4.2 Z" fill="#f2f2f2" fill-opacity="0"/><path d="M10.8 1.2 L10.8 7.8 L16.2 4.5 Z" fill="#5ab83c"/></svg>
<svg style="left:43px;top:337px;" width="7" height="12" viewBox="0 -0.5 7 12"><path d="M1.2 1 L5.6 5.4 L1.2 9.8" fill="none" stroke="#5c5c5c" stroke-width="1.7"/></svg>
<span style="left:81px;top:334.0px;line-height:17px;font-size:13px;color:#0a7700;letter-spacing:-0.102px;">MyDoc.java</span>
<svg style="left:62px;top:355px;" width="17" height="17" viewBox="0 0 17 17"><circle cx="8" cy="9" r="7.15" fill="#83c6e2"/><text x="7.7" y="12.6" text-anchor="middle" font-family="Liberation Sans,sans-serif" font-weight="400" font-size="11.5" stroke="#3f4a54" stroke-width="0.2" fill="#3f4a54">c</text></svg>
<span style="left:81px;top:355.0px;line-height:17px;font-size:13px;color:#0a7700;letter-spacing:0.178px;">MyUtil</span>
<svg style="left:62px;top:376px;" width="17" height="17" viewBox="0 0 17 17"><circle cx="8" cy="9" r="7.15" fill="#83c6e2"/><text x="7.7" y="12.6" text-anchor="middle" font-family="Liberation Sans,sans-serif" font-weight="400" font-size="11.5" stroke="#3f4a54" stroke-width="0.2" fill="#3f4a54">c</text><path d="M9.5 0.5 L9.5 8 L15.5 4.2 Z" fill="#f2f2f2" fill-opacity="0"/><path d="M10.8 1.2 L10.8 7.8 L16.2 4.5 Z" fill="#5ab83c"/></svg>
<span style="left:81px;top:376.0px;line-height:17px;font-size:13px;color:#0a7700;letter-spacing:0.060px;">StringBufferDemo</span>
<div style="left:0px;top:395px;width:332px;height:21px;background:#effae7;"></div>
<svg style="left:22px;top:402px;" width="11" height="7" viewBox="0 0 11 7"><path d="M1 1.2 L5.4 5.6 L9.8 1.2" fill="none" stroke="#5c5c5c" stroke-width="1.7"/></svg>
<svg style="left:43px;top:400px;" width="14" height="11" viewBox="0 0 14 11"><path d="M0 0.5 h5.6 l1.6 2 H14 V11 H0 Z" fill="#9cd088"/></svg>
<span style="left:60.5px;top:397.0px;line-height:17px;font-size:13px;letter-spacing:0.344px;">test</span>
<div style="left:0px;top:416px;width:332px;height:21px;background:#d4d4d4;"></div>
<svg style="left:62px;top:418px;" width="17" height="17" viewBox="0 0 17 17"><circle cx="8" cy="9" r="7.15" fill="#83c6e2"/><text x="7.7" y="12.6" text-anchor="middle" font-family="Liberation Sans,sans-serif" font-weight="400" font-size="11.5" stroke="#3f4a54" stroke-width="0.2" fill="#3f4a54">c</text><path d="M12.6 1.4 L12.6 6.6 L16 4 Z" fill="#5ab83c"/><path d="M12 1.2 L12 6.8 L8.4 4 Z" fill="#e8603c"/></svg>
<span style="left:81px;top:418.0px;line-height:17px;font-size:13px;color:#0a7700;letter-spacing:-0.014px;">ComplexTest</span>
<div style="left:0px;top:437px;width:332px;height:21px;background:#effae7;"></div>
<svg style="left:62px;top:439px;" width="17" height="17" viewBox="0 0 17 17"><circle cx="8" cy="9" r="7.15" fill="#83c6e2"/><text x="7.7" y="12.6" text-anchor="middle" font-family="Liberation Sans,sans-serif" font-weight="400" font-size="11.5" stroke="#3f4a54" stroke-width="0.2" fill="#3f4a54">c</text><path d="M9.5 0.5 L9.5 8 L15.5 4.2 Z" fill="#f2f2f2" fill-opacity="0"/><path d="M10.8 1.2 L10.8 7.8 L16.2 4.5 Z" fill="#5ab83c"/></svg>
<span style="left:81px;top:439.0px;line-height:17px;font-size:13px;letter-spacing:-0.250px;">For</span>
<div style="left:0px;top:458px;width:332px;height:21px;background:#effae7;"></div>
<svg style="left:62px;top:460px;" width="17" height="17" viewBox="0 0 17 17"><circle cx="8" cy="9" r="7.15" fill="#83c6e2"/><text x="7.7" y="12.6" text-anchor="middle" font-family="Liberation Sans,sans-serif" font-weight="400" font-size="11.5" stroke="#3f4a54" stroke-width="0.2" fill="#3f4a54">c</text><path d="M12.6 1.4 L12.6 6.6 L16 4 Z" fill="#5ab83c"/><path d="M12 1.2 L12 6.8 L8.4 4 Z" fill="#e8603c"/></svg>
<span style="left:81px;top:460.0px;line-height:17px;font-size:13px;color:#0a7700;letter-spacing:0.116px;">MyUtilTest</span>
<div style="left:0px;top:479px;width:332px;height:21px;background:#effae7;"></div>
<svg style="left:62px;top:481px;" width="17" height="17" viewBox="0 0 17 17"><circle cx="8" cy="9" r="7.15" fill="#83c6e2"/><text x="7.7" y="12.6" text-anchor="middle" font-family="Liberation Sans,sans-serif" font-weight="400" font-size="11.5" stroke="#3f4a54" stroke-width="0.2" fill="#3f4a54">c</text><path d="M12.6 1.4 L12.6 6.6 L16 4 Z" fill="#5ab83c"/><path d="M12 1.2 L12 6.8 L8.4 4 Z" fill="#e8603c"/></svg>
<span style="left:81px;top:481.0px;line-height:17px;font-size:13px;color:#0a7700;letter-spacing:0.056px;">StringBufferDemoTest</span>
<div style="left:0px;top:500px;width:332px;height:21px;background:#effae7;"></div>
<svg style="left:62px;top:502px;" width="17" height="17" viewBox="0 0 17 17"><circle cx="8" cy="9" r="7.15" fill="#83c6e2"/><text x="7.7" y="12.6" text-anchor="middle" font-family="Liberation Sans,sans-serif" font-weight="400" font-size="11.5" stroke="#3f4a54" stroke-width="0.2" fill="#3f4a54">c</text><path d="M9.5 0.5 L9.5 8 L15.5 4.2 Z" fill="#f2f2f2" fill-opacity="0"/><path d="M10.8 1.2 L10.8 7.8 L16.2 4.5 Z" fill="#5ab83c"/></svg>
<span style="left:81px;top:502.0px;line-height:17px;font-size:13px;letter-spacing:-0.129px;">While</span>
<svg style="left:44px;top:524px;" width="12" height="16" viewBox="-0.5 -0.5 12 16"><path d="M4 0.5 H10.4 V14 H0.5 V4 Z" fill="#b0b8be"/><path d="M0.2 3.6 L3.6 0.2 V3.6 Z" fill="#8e979e"/><path d="M2 7.6 h6.4 M2 9.6 h6.4 M2 11.6 h6.4" stroke="#596066" stroke-width="1"/></svg>
<span style="left:60.5px;top:523.0px;line-height:17px;font-size:13px;letter-spacing:0.335px;">.gitignore</span>
<svg style="left:44px;top:545px;" width="12" height="16" viewBox="-0.5 -0.5 12 16"><path d="M4 0.5 H10.4 V14 H0.5 V4 Z" fill="#b0b8be"/><path d="M0.2 3.6 L3.6 0.2 V3.6 Z" fill="#8e979e"/></svg>
<span style="left:52.4px;top:549.1px;line-height:15px;font-size:11px;color:#3fa4dc;font-weight:700;">?</span>
<span style="left:60.5px;top:544.0px;line-height:17px;font-size:13px;letter-spacing:-0.247px;">.pp2_2.java.swp</span>
<svg style="left:44px;top:566px;" width="12" height="16" viewBox="-0.5 -0.5 12 16"><path d="M4 0.5 H10.4 V14 H0.5 V4 Z" fill="#b0b8be"/><path d="M0.2 3.6 L3.6 0.2 V3.6 Z" fill="#8e979e"/></svg>
<svg style="left:41px;top:575px;" width="10" height="9" viewBox="-0.5 0 10 9"><circle cx="4.3" cy="4.3" r="4.2" fill="#e8772e"/><path d="M4.8 2 V5.4 H2.6" stroke="#5a2a10" stroke-width="1" fill="none"/></svg>
<span style="left:60.5px;top:565.0px;line-height:17px;font-size:13px;letter-spacing:-0.159px;">jieshi.java</span>
<div style="left:0px;top:581px;width:1366px;height:1px;background:#c2c2c2;"></div>
<div style="left:333px;top:100px;width:1033px;height:457px;background:#ffffff;"></div>
<div style="left:333px;top:100px;width:57px;height:457px;background:#f0f0f0;"></div>
<div style="left:390px;top:100px;width:1px;height:457px;background:#dcdcdc;"></div>
<div style="left:1117px;top:100px;width:1px;height:457px;background:#e3e3e3;"></div>
<div style="left:391px;top:271px;width:975px;height:19px;background:#fffae3;"></div>
<div style="left:333px;top:271px;width:57px;height:19px;background:#fffae3;"></div>
<div style="left:391px;top:309px;width:975px;height:19px;background:#faeae6;"></div>
<div style="left:1117px;top:271px;width:1px;height:19px;background:#ebe6d1;"></div>
<div style="left:1117px;top:309px;width:1px;height:19px;background:#e6d7d4;"></div>
<span class="c" style="left:344px;top:102.7px;line-height:19px;font-size:11px;transform:scaleX(0.9091);color:#999;">1</span>
<span class="c" style="left:344px;top:121.7px;line-height:19px;font-size:11px;transform:scaleX(0.9091);color:#999;">5</span>
<span class="c" style="left:344px;top:140.7px;line-height:19px;font-size:11px;transform:scaleX(0.9091);color:#999;">6</span>
<span class="c" style="left:344px;top:159.7px;line-height:19px;font-size:11px;transform:scaleX(0.9091);color:#999;">7</span>
<span class="c" style="left:344px;top:178.7px;line-height:19px;font-size:11px;transform:scaleX(0.9091);color:#999;">8</span>
<span class="c" style="left:344px;top:197.7px;line-height:19px;font-size:11px;transform:scaleX(0.9091);color:#999;">9</span>
<span class="c" style="left:338px;top:216.7px;line-height:19px;font-size:11px;transform:scaleX(0.9091);color:#999;">10</span>
<span class="c" style="left:338px;top:235.7px;line-height:19px;font-size:11px;transform:scaleX(0.9091);color:#999;">11</span>
<span class="c" style="left:338px;top:254.7px;line-height:19px;font-size:11px;transform:scaleX(0.9091);color:#999;">12</span>
<span class="c" style="left:338px;top:273.7px;line-height:19px;font-size:11px;transform:scaleX(0.9091);color:#999;">13</span>
<span class="c" style="left:338px;top:292.7px;line-height:19px;font-size:11px;transform:scaleX(0.9091);color:#999;">14</span>
<span class="c" style="left:338px;top:311.7px;line-height:19px;font-size:11px;transform:scaleX(0.9091);color:#999;">15</span>
<span class="c" style="left:338px;top:330.7px;line-height:19px;font-size:11px;transform:scaleX(0.9091);color:#999;">16</span>
<span class="c" style="left:338px;top:349.7px;line-height:19px;font-size:11px;transform:scaleX(0.9091);color:#999;">17</span>
<span class="c" style="left:338px;top:368.7px;line-height:19px;font-size:11px;transform:scaleX(0.9091);color:#999;">18</span>
<span class="c" style="left:338px;top:387.7px;line-height:19px;font-size:11px;transform:scaleX(0.9091);color:#999;">19</span>
<span class="c" style="left:338px;top:406.7px;line-height:19px;font-size:11px;transform:scaleX(0.9091);color:#999;">20</span>
<span class="c" style="left:338px;top:425.7px;line-height:19px;font-size:11px;transform:scaleX(0.9091);color:#999;">21</span>
<span class="c" style="left:338px;top:444.7px;line-height:19px;font-size:11px;transform:scaleX(0.9091);color:#999;">22</span>
<span class="c" style="left:338px;top:463.7px;line-height:19px;font-size:11px;transform:scaleX(0.9091);color:#999;">23</span>
<span class="c" style="left:338px;top:482.7px;line-height:19px;font-size:11px;transform:scaleX(0.9091);color:#999;">24</span>
<span class="c" style="left:338px;top:501.7px;line-height:19px;font-size:11px;transform:scaleX(0.9091);color:#999;">25</span>
<span class="c" style="left:338px;top:520.7px;line-height:19px;font-size:11px;transform:scaleX(0.9091);color:#999;">26</span>
<span class="c" style="left:338px;top:539.7px;line-height:19px;font-size:11px;transform:scaleX(0.9091);color:#999;">27</span>
<svg style="left:357px;top:138px;" width="18" height="19" viewBox="0 0 18 19"><circle cx="6.6" cy="7.7" r="4.7" fill="#e3efe1" stroke="#4fb04f" stroke-width="1.3"/><path d="M9.2 8 L16.6 13 L9.2 17.8 Z" fill="#f0f0f0"/><path d="M10 8.9 L16 13 L10 17.1 Z" fill="#45995c"/></svg>
<svg style="left:357px;top:233px;" width="18" height="19" viewBox="0 0 18 19"><circle cx="6.6" cy="7.7" r="4.7" fill="#e3efe1" stroke="#4fb04f" stroke-width="1.3"/><path d="M9.2 8 L16.6 13 L9.2 17.8 Z" fill="#f0f0f0"/><path d="M10 8.9 L16 13 L10 17.1 Z" fill="#45995c"/></svg>
<svg style="left:357px;top:385px;" width="18" height="19" viewBox="0 0 18 19"><circle cx="6.6" cy="7.7" r="4.7" fill="#e3efe1" stroke="#4fb04f" stroke-width="1.3"/><path d="M9.2 8 L16.6 13 L9.2 17.8 Z" fill="#f0f0f0"/><path d="M10 8.9 L16 13 L10 17.1 Z" fill="#45995c"/></svg>
<svg style="left:360px;top:311px;" width="15" height="15" viewBox="0 0 15 15"><defs><linearGradient id="bpg" x1="0" y1="0" x2="0" y2="1"><stop offset="0" stop-color="#f08a7c"/><stop offset="1" stop-color="#df5a4e"/></linearGradient></defs><circle cx="7.5" cy="7.5" r="7.2" fill="url(#bpg)" stroke="#d9665a" stroke-width="0.6"/></svg>
<svg style="left:385px;top:105px;" width="11" height="12" viewBox="0 -0.5 11 12"><rect x="0.5" y="0.5" width="9.5" height="9.5" fill="#fff" stroke="#b0b0b0"/><path d="M2.5 5 H7.5 M5 2.5 V7.5" stroke="#8a8a8a" stroke-width="1"/></svg>
<div style="left:390px;top:249px;width:1px;height:73px;background:#c2c2c2;"></div>
<div style="left:390px;top:401px;width:1px;height:73px;background:#c2c2c2;"></div>
<svg style="left:385px;top:238px;" width="12" height="13" viewBox="0 0 12 13"><path d="M0.5 0.5 H10.5 V6.6 L5.5 11.8 L0.5 6.6 Z" fill="#fff" stroke="#b4b4b4"/><path d="M2.8 4.5 H8.2" stroke="#9a9a9a" stroke-width="1"/></svg>
<svg style="left:385px;top:390px;" width="12" height="13" viewBox="0 0 12 13"><path d="M0.5 0.5 H10.5 V6.6 L5.5 11.8 L0.5 6.6 Z" fill="#fff" stroke="#b4b4b4"/><path d="M2.8 4.5 H8.2" stroke="#9a9a9a" stroke-width="1"/></svg>
<svg style="left:385px;top:311px;" width="12" height="14" viewBox="0 -0.5 12 14"><path d="M0.5 12 H10.5 V5.6 L5.5 0.6 L0.5 5.6 Z" fill="#fff" stroke="#b4b4b4"/><path d="M2.8 8 H8.2" stroke="#9a9a9a" stroke-width="1"/></svg>
<svg style="left:385px;top:463px;" width="12" height="14" viewBox="0 -0.5 12 14"><path d="M0.5 12 H10.5 V5.6 L5.5 0.6 L0.5 5.6 Z" fill="#fff" stroke="#b4b4b4"/><path d="M2.8 8 H8.2" stroke="#9a9a9a" stroke-width="1"/></svg>
<div style="left:445px;top:101px;width:21px;height:18px;background:#e9f5e6;"></div>
<span class="c" style="left:397px;top:103px;line-height:19px;font-size:11px;transform:scaleX(1.0606);color:#555;font-weight:700;">import </span>
<span class="c" style="left:446.5px;top:103px;line-height:19px;font-size:11px;transform:scaleX(0.9091);color:#8a8a8a;">...</span>
<span class="c" style="left:397px;top:141px;line-height:19px;font-size:11px;transform:scaleX(1.0606);color:#000080;font-weight:700;">public </span>
<span class="c" style="left:445px;top:141px;line-height:19px;font-size:11px;transform:scaleX(1.0606);color:#000080;font-weight:700;">class </span>
<span class="c" style="left:486px;top:141px;line-height:19px;font-size:11px;transform:scaleX(0.9091);">ComplexTest </span>
<span class="c" style="left:558px;top:141px;line-height:19px;font-size:11px;transform:scaleX(0.9091);">{</span>
<div style="left:445px;top:157px;width:7px;height:19px;background:#f5e6b8;"></div>
<div style="left:541px;top:159px;width:56px;height:15px;background:rgba(90,90,60,0.075);border-radius:4px;"></div>
<div style="left:613px;top:159px;width:67px;height:15px;background:rgba(90,90,60,0.075);border-radius:4px;"></div>
<span class="c" style="left:397px;top:160px;line-height:19px;font-size:11px;transform:scaleX(0.9091);">Complex </span>
<span class="c" style="left:445px;top:160px;line-height:19px;font-size:11px;transform:scaleX(1.0606);color:#660e7a;font-weight:700;">a </span>
<span class="c" style="left:458px;top:160px;line-height:19px;font-size:11px;transform:scaleX(0.9091);">=</span>
<span class="c" style="left:464px;top:160px;line-height:19px;font-size:11px;transform:scaleX(1.0606);color:#000080;font-weight:700;">new </span>
<span class="c" style="left:491px;top:160px;line-height:19px;font-size:11px;transform:scaleX(0.9091);">Complex(</span>
<span style="left:546px;top:160.0px;line-height:15px;font-size:12px;color:#7a7a7a;letter-spacing:-0.338px;">Realpart:</span>
<span class="c" style="left:599px;top:160px;line-height:19px;font-size:11px;transform:scaleX(0.9091);color:#0000ff;">5</span>
<span class="c" style="left:605px;top:160px;line-height:19px;font-size:11px;transform:scaleX(0.9091);">,</span>
<span style="left:618px;top:160.0px;line-height:15px;font-size:12px;color:#7a7a7a;letter-spacing:-0.042px;">Imagepart:</span>
<span class="c" style="left:682px;top:160px;line-height:19px;font-size:11px;transform:scaleX(0.9091);color:#0000ff;">5</span>
<span class="c" style="left:688px;top:160px;line-height:19px;font-size:11px;transform:scaleX(0.9091);">);</span>
<div style="left:445px;top:176px;width:7px;height:19px;background:#f5e6b8;"></div>
<div style="left:541px;top:178px;width:56px;height:15px;background:rgba(90,90,60,0.075);border-radius:4px;"></div>
<div style="left:619px;top:178px;width:67px;height:15px;background:rgba(90,90,60,0.075);border-radius:4px;"></div>
<span class="c" style="left:397px;top:179px;line-height:19px;font-size:11px;transform:scaleX(0.9091);">Complex </span>
<span class="c" style="left:445px;top:179px;line-height:19px;font-size:11px;transform:scaleX(1.0606);color:#660e7a;font-weight:700;">b </span>
<span class="c" style="left:458px;top:179px;line-height:19px;font-size:11px;transform:scaleX(0.9091);">=</span>
<span class="c" style="left:464px;top:179px;line-height:19px;font-size:11px;transform:scaleX(1.0606);color:#000080;font-weight:700;">new </span>
<span class="c" style="left:491px;top:179px;line-height:19px;font-size:11px;transform:scaleX(0.9091);">Complex(</span>
<span style="left:546px;top:179.0px;line-height:15px;font-size:12px;color:#7a7a7a;letter-spacing:-0.338px;">Realpart:</span>
<span class="c" style="left:599px;top:179px;line-height:19px;font-size:11px;transform:scaleX(0.9091);color:#0000ff;">-1</span>
<span class="c" style="left:611px;top:179px;line-height:19px;font-size:11px;transform:scaleX(0.9091);">,</span>
<span style="left:624px;top:179.0px;line-height:15px;font-size:12px;color:#7a7a7a;letter-spacing:-0.042px;">Imagepart:</span>
<span class="c" style="left:688px;top:179px;line-height:19px;font-size:11px;transform:scaleX(0.9091);color:#0000ff;">3</span>
<span class="c" style="left:694px;top:179px;line-height:19px;font-size:11px;transform:scaleX(0.9091);">);</span>
<div style="left:445px;top:195px;width:7px;height:19px;background:#f5e6b8;"></div>
<div style="left:541px;top:197px;width:56px;height:15px;background:rgba(90,90,60,0.075);border-radius:4px;"></div>
<div style="left:619px;top:197px;width:67px;height:15px;background:rgba(90,90,60,0.075);border-radius:4px;"></div>
<span class="c" style="left:397px;top:198px;line-height:19px;font-size:11px;transform:scaleX(0.9091);">Complex </span>
<span class="c" style="left:445px;top:198px;line-height:19px;font-size:11px;transform:scaleX(1.0606);color:#660e7a;font-weight:700;">c </span>
<span class="c" style="left:458px;top:198px;line-height:19px;font-size:11px;transform:scaleX(0.9091);">=</span>
<span class="c" style="left:464px;top:198px;line-height:19px;font-size:11px;transform:scaleX(1.0606);color:#000080;font-weight:700;">new </span>
<span class="c" style="left:491px;top:198px;line-height:19px;font-size:11px;transform:scaleX(0.9091);">Complex(</span>
<span style="left:546px;top:198.0px;line-height:15px;font-size:12px;color:#7a7a7a;letter-spacing:-0.338px;">Realpart:</span>
<span class="c" style="left:599px;top:198px;line-height:19px;font-size:11px;transform:scaleX(0.9091);color:#0000ff;">-1</span>
<span class="c" style="left:611px;top:198px;line-height:19px;font-size:11px;transform:scaleX(0.9091);">,</span>
<span style="left:624px;top:198.0px;line-height:15px;font-size:12px;color:#7a7a7a;letter-spacing:-0.042px;">Imagepart:</span>
<span class="c" style="left:688px;top:198px;line-height:19px;font-size:11px;transform:scaleX(0.9091);color:#0000ff;">-1</span>
<span class="c" style="left:700px;top:198px;line-height:19px;font-size:11px;transform:scaleX(0.9091);">);</span>
<span class="c" style="left:421px;top:217px;line-height:19px;font-size:11px;transform:scaleX(0.9091);color:#808000;">@Test</span>
<svg style="left:521px;top:249px;" width="54" height="3" viewBox="0 0 54 3"><path d="M0 2.5 L1.5 0.5 L2.5 2.5 L3.5 0.5 L4.5 2.5 L5.5 0.5 L6.5 2.5 L7.5 0.5 L8.5 2.5 L9.5 0.5 L10.5 2.5 L11.5 0.5 L12.5 2.5 L13.5 0.5 L14.5 2.5 L15.5 0.5 L16.5 2.5 L17.5 0.5 L18.5 2.5 L19.5 0.5 L20.5 2.5 L21.5 0.5 L22.5 2.5 L23.5 0.5 L24.5 2.5 L25.5 0.5 L26.5 2.5 L27.5 0.5 L28.5 2.5 L29.5 0.5 L30.5 2.5 L31.5 0.5 L32.5 2.5 L33.5 0.5 L34.5 2.5 L35.5 0.5 L36.5 2.5 L37.5 0.5 L38.5 2.5 L39.5 0.5 L40.5 2.5 L41.5 0.5 L42.5 2.5 L43.5 0.5 L44.5 2.5 L45.5 0.5 L46.5 2.5 L47.5 0.5 L48.5 2.5 L49.5 0.5 L50.5 2.5 L51.5 0.5 L52.5 2.5 L53.5 0.5 L54.5 2.5" fill="none" stroke="#a6cfa2" stroke-width="0.7"/></svg>
<span class="c" style="left:421px;top:236px;line-height:19px;font-size:11px;transform:scaleX(1.0606);color:#000080;font-weight:700;">public </span>
<span class="c" style="left:469px;top:236px;line-height:19px;font-size:11px;transform:scaleX(1.0606);color:#000080;font-weight:700;">void </span>
<span class="c" style="left:503px;top:236px;line-height:19px;font-size:11px;transform:scaleX(0.9091);">getImagepart() </span>
<span class="c" style="left:593px;top:236px;line-height:19px;font-size:11px;transform:scaleX(0.9091);">{</span>
<div style="left:501px;top:254px;width:61px;height:15px;background:rgba(90,90,60,0.075);border-radius:4px;"></div>
<div style="left:607px;top:254px;width:45px;height:15px;background:rgba(90,90,60,0.075);border-radius:4px;"></div>
<span class="c" style="left:421px;top:255px;line-height:19px;font-size:11px;transform:scaleX(0.9091);font-style:italic;">assertEquals</span>
<span class="c" style="left:493px;top:255px;line-height:19px;font-size:11px;transform:scaleX(0.9091);">(</span>
<span style="left:506px;top:255.0px;line-height:15px;font-size:12px;color:#7a7a7a;letter-spacing:-0.131px;">expected:</span>
<span class="c" style="left:564px;top:255px;line-height:19px;font-size:11px;transform:scaleX(1.0606);color:#008000;font-weight:700;">"5.0"</span>
<span class="c" style="left:599px;top:255px;line-height:19px;font-size:11px;transform:scaleX(0.9091);">,</span>
<span style="left:612px;top:255.0px;line-height:15px;font-size:12px;color:#7a7a7a;letter-spacing:-0.060px;">actual:</span>
<span class="c" style="left:654px;top:255px;line-height:19px;font-size:11px;transform:scaleX(1.0606);color:#008000;font-weight:700;">""</span>
<span class="c" style="left:668px;top:255px;line-height:19px;font-size:11px;transform:scaleX(0.9091);">+</span>
<span class="c" style="left:674px;top:255px;line-height:19px;font-size:11px;transform:scaleX(1.0606);color:#660e7a;font-weight:700;">a</span>
<span class="c" style="left:681px;top:255px;line-height:19px;font-size:11px;transform:scaleX(0.9091);">.getImagepart());</span>
<div style="left:501px;top:273px;width:61px;height:15px;background:rgba(90,90,60,0.075);border-radius:4px;"></div>
<div style="left:607px;top:273px;width:45px;height:15px;background:rgba(90,90,60,0.075);border-radius:4px;"></div>
<span class="c" style="left:421px;top:274px;line-height:19px;font-size:11px;transform:scaleX(0.9091);font-style:italic;">assertEquals</span>
<span class="c" style="left:493px;top:274px;line-height:19px;font-size:11px;transform:scaleX(0.9091);">(</span>
<span style="left:506px;top:274.0px;line-height:15px;font-size:12px;color:#7a7a7a;letter-spacing:-0.131px;">expected:</span>
<span class="c" style="left:564px;top:274px;line-height:19px;font-size:11px;transform:scaleX(1.0606);color:#008000;font-weight:700;">"3.0"</span>
<span class="c" style="left:599px;top:274px;line-height:19px;font-size:11px;transform:scaleX(0.9091);">,</span>
<span style="left:612px;top:274.0px;line-height:15px;font-size:12px;color:#7a7a7a;letter-spacing:-0.060px;">actual:</span>
<span class="c" style="left:654px;top:274px;line-height:19px;font-size:11px;transform:scaleX(1.0606);color:#008000;font-weight:700;">""</span>
<span class="c" style="left:668px;top:274px;line-height:19px;font-size:11px;transform:scaleX(0.9091);">+</span>
<span class="c" style="left:674px;top:274px;line-height:19px;font-size:11px;transform:scaleX(1.0606);color:#660e7a;font-weight:700;">b</span>
<span class="c" style="left:681px;top:274px;line-height:19px;font-size:11px;transform:scaleX(0.9091);">.getImagepart());</span>
<div style="left:501px;top:292px;width:61px;height:15px;background:rgba(90,90,60,0.075);border-radius:4px;"></div>
<div style="left:632px;top:292px;width:45px;height:15px;background:rgba(90,90,60,0.075);border-radius:4px;"></div>
<span class="c" style="left:421px;top:293px;line-height:19px;font-size:11px;transform:scaleX(0.9091);font-style:italic;">assertEquals</span>
<span class="c" style="left:493px;top:293px;line-height:19px;font-size:11px;transform:scaleX(0.9091);">(</span>
<span style="left:506px;top:293.0px;line-height:15px;font-size:12px;color:#7a7a7a;letter-spacing:-0.131px;">expected:</span>
<span class="c" style="left:564px;top:293px;line-height:19px;font-size:11px;transform:scaleX(1.0606);color:#008000;font-weight:700;">"-1.0"</span>
<span class="c" style="left:606px;top:293px;line-height:19px;font-size:11px;transform:scaleX(0.9091);">,   </span>
<span style="left:637px;top:293.0px;line-height:15px;font-size:12px;color:#7a7a7a;letter-spacing:-0.060px;">actual:</span>
<span class="c" style="left:679px;top:293px;line-height:19px;font-size:11px;transform:scaleX(1.0606);color:#008000;font-weight:700;">""</span>
<span class="c" style="left:693px;top:293px;line-height:19px;font-size:11px;transform:scaleX(0.9091);">+ </span>
<span class="c" style="left:705px;top:293px;line-height:19px;font-size:11px;transform:scaleX(1.0606);color:#660e7a;font-weight:700;">c</span>
<span class="c" style="left:712px;top:293px;line-height:19px;font-size:11px;transform:scaleX(0.9091);">.getImagepart());</span>
<span class="c" style="left:421px;top:312px;line-height:19px;font-size:11px;transform:scaleX(0.9091);">}</span>
<span class="c" style="left:421px;top:369px;line-height:19px;font-size:11px;transform:scaleX(0.9091);color:#808000;">@Test</span>
<svg style="left:521px;top:401px;" width="48" height="3" viewBox="0 0 48 3"><path d="M0 2.5 L1.5 0.5 L2.5 2.5 L3.5 0.5 L4.5 2.5 L5.5 0.5 L6.5 2.5 L7.5 0.5 L8.5 2.5 L9.5 0.5 L10.5 2.5 L11.5 0.5 L12.5 2.5 L13.5 0.5 L14.5 2.5 L15.5 0.5 L16.5 2.5 L17.5 0.5 L18.5 2.5 L19.5 0.5 L20.5 2.5 L21.5 0.5 L22.5 2.5 L23.5 0.5 L24.5 2.5 L25.5 0.5 L26.5 2.5 L27.5 0.5 L28.5 2.5 L29.5 0.5 L30.5 2.5 L31.5 0.5 L32.5 2.5 L33.5 0.5 L34.5 2.5 L35.5 0.5 L36.5 2.5 L37.5 0.5 L38.5 2.5 L39.5 0.5 L40.5 2.5 L41.5 0.5 L42.5 2.5 L43.5 0.5 L44.5 2.5 L45.5 0.5 L46.5 2.5 L47.5 0.5 L48.5 2.5" fill="none" stroke="#a6cfa2" stroke-width="0.7"/></svg>
<span class="c" style="left:421px;top:388px;line-height:19px;font-size:11px;transform:scaleX(1.0606);color:#000080;font-weight:700;">public </span>
<span class="c" style="left:469px;top:388px;line-height:19px;font-size:11px;transform:scaleX(1.0606);color:#000080;font-weight:700;">void </span>
<span class="c" style="left:503px;top:388px;line-height:19px;font-size:11px;transform:scaleX(0.9091);">getRealpart() </span>
<span class="c" style="left:587px;top:388px;line-height:19px;font-size:11px;transform:scaleX(0.9091);">{</span>
<div style="left:525px;top:406px;width:61px;height:15px;background:rgba(90,90,60,0.075);border-radius:4px;"></div>
<div style="left:631px;top:406px;width:45px;height:15px;background:rgba(90,90,60,0.075);border-radius:4px;"></div>
<span class="c" style="left:445px;top:407px;line-height:19px;font-size:11px;transform:scaleX(0.9091);font-style:italic;">assertEquals</span>
<span class="c" style="left:517px;top:407px;line-height:19px;font-size:11px;transform:scaleX(0.9091);">(</span>
<span style="left:530px;top:407.0px;line-height:15px;font-size:12px;color:#7a7a7a;letter-spacing:-0.131px;">expected:</span>
<span class="c" style="left:588px;top:407px;line-height:19px;font-size:11px;transform:scaleX(1.0606);color:#008000;font-weight:700;">"5.0"</span>
<span class="c" style="left:623px;top:407px;line-height:19px;font-size:11px;transform:scaleX(0.9091);">,</span>
<span style="left:636px;top:407.0px;line-height:15px;font-size:12px;color:#7a7a7a;letter-spacing:-0.060px;">actual:</span>
<span class="c" style="left:678px;top:407px;line-height:19px;font-size:11px;transform:scaleX(1.0606);color:#008000;font-weight:700;">""</span>
<span class="c" style="left:692px;top:407px;line-height:19px;font-size:11px;transform:scaleX(0.9091);">+</span>
<span class="c" style="left:698px;top:407px;line-height:19px;font-size:11px;transform:scaleX(1.0606);color:#660e7a;font-weight:700;">a</span>
<span class="c" style="left:705px;top:407px;line-height:19px;font-size:11px;transform:scaleX(0.9091);">.getRealpart());</span>
<div style="left:525px;top:425px;width:61px;height:15px;background:rgba(90,90,60,0.075);border-radius:4px;"></div>
<div style="left:638px;top:425px;width:45px;height:15px;background:rgba(90,90,60,0.075);border-radius:4px;"></div>
<span class="c" style="left:445px;top:426px;line-height:19px;font-size:11px;transform:scaleX(0.9091);font-style:italic;">assertEquals</span>
<span class="c" style="left:517px;top:426px;line-height:19px;font-size:11px;transform:scaleX(0.9091);">(</span>
<span style="left:530px;top:426.0px;line-height:15px;font-size:12px;color:#7a7a7a;letter-spacing:-0.131px;">expected:</span>
<span class="c" style="left:588px;top:426px;line-height:19px;font-size:11px;transform:scaleX(1.0606);color:#008000;font-weight:700;">"-1.0"</span>
<span class="c" style="left:630px;top:426px;line-height:19px;font-size:11px;transform:scaleX(0.9091);">,</span>
<span style="left:643px;top:426.0px;line-height:15px;font-size:12px;color:#7a7a7a;letter-spacing:-0.060px;">actual:</span>
<span class="c" style="left:685px;top:426px;line-height:19px;font-size:11px;transform:scaleX(1.0606);color:#008000;font-weight:700;">""</span>
<span class="c" style="left:699px;top:426px;line-height:19px;font-size:11px;transform:scaleX(0.9091);">+</span>
<span class="c" style="left:705px;top:426px;line-height:19px;font-size:11px;transform:scaleX(1.0606);color:#660e7a;font-weight:700;">b</span>
<span class="c" style="left:712px;top:426px;line-height:19px;font-size:11px;transform:scaleX(0.9091);">.getRealpart());</span>
<div style="left:525px;top:444px;width:61px;height:15px;background:rgba(90,90,60,0.075);border-radius:4px;"></div>
<div style="left:638px;top:444px;width:45px;height:15px;background:rgba(90,90,60,0.075);border-radius:4px;"></div>
<span class="c" style="left:445px;top:445px;line-height:19px;font-size:11px;transform:scaleX(0.9091);font-style:italic;">assertEquals</span>
<span class="c" style="left:517px;top:445px;line-height:19px;font-size:11px;transform:scaleX(0.9091);">(</span>
<span style="left:530px;top:445.0px;line-height:15px;font-size:12px;color:#7a7a7a;letter-spacing:-0.131px;">expected:</span>
<span class="c" style="left:588px;top:445px;line-height:19px;font-size:11px;transform:scaleX(1.0606);color:#008000;font-weight:700;">"-1.0"</span>
<span class="c" style="left:630px;top:445px;line-height:19px;font-size:11px;transform:scaleX(0.9091);">,</span>
<span style="left:643px;top:445.0px;line-height:15px;font-size:12px;color:#7a7a7a;letter-spacing:-0.060px;">actual:</span>
<span class="c" style="left:685px;top:445px;line-height:19px;font-size:11px;transform:scaleX(1.0606);color:#008000;font-weight:700;">""</span>
<span class="c" style="left:699px;top:445px;line-height:19px;font-size:11px;transform:scaleX(0.9091);">+</span>
<span class="c" style="left:705px;top:445px;line-height:19px;font-size:11px;transform:scaleX(1.0606);color:#660e7a;font-weight:700;">c</span>
<span class="c" style="left:712px;top:445px;line-height:19px;font-size:11px;transform:scaleX(0.9091);">.getRealpart());</span>
<span class="c" style="left:421px;top:464px;line-height:19px;font-size:11px;transform:scaleX(0.9091);">}</span>
<span class="c" style="left:421px;top:540px;line-height:19px;font-size:11px;transform:scaleX(0.9091);color:#808000;">@Test</span>
<div style="left:570px;top:271px;width:2px;height:19px;background:#000;"></div>
<div style="left:424px;top:404px;width:1px;height:57px;background:#e0e0e0;"></div>
<div style="left:1354px;top:102px;width:10px;height:9.5px;background:#e8c000;"></div>
<div style="left:1356px;top:117px;width:10px;height:205px;background:rgba(140,140,140,0.30);border-left:1px solid rgba(120,120,120,0.35);box-sizing:border-box;"></div>
<div style="left:1352px;top:116px;width:14px;height:2px;background:#e0b500;"></div>
<div style="left:1352px;top:141px;width:14px;height:2px;background:#e0b500;"></div>
<div style="left:1352px;top:150px;width:14px;height:2px;background:#e0b500;"></div>
<div style="left:1352px;top:159px;width:14px;height:2px;background:#e0b500;"></div>
<div style="left:1352px;top:211px;width:14px;height:2px;background:#f0b8b4;"></div>
<div style="left:333px;top:557px;width:1033px;height:24px;background:#f0f0f0;"></div>
<div style="left:333px;top:557px;width:1033px;height:1px;background:#d9d9d9;"></div>
<span style="left:400.5px;top:561.0px;line-height:17px;font-size:13px;color:#555;letter-spacing:-0.064px;">ComplexTest</span>
<span style="left:485.2px;top:559.4px;line-height:18px;font-size:18px;color:#9a9a9a;">›</span>
<span style="left:499.5px;top:561.0px;line-height:17px;font-size:13px;color:#555;letter-spacing:0.172px;">getImagepart()</span>
<div style="left:0px;top:582px;width:1366px;height:146px;background:#f2f2f2;"></div>
<div style="left:0px;top:582px;width:1366px;height:23px;background:linear-gradient(#f0f0f0,#e6e6e6);"></div>
<span style="left:4.5px;top:586.0px;line-height:16px;font-size:12px;color:#555;letter-spacing:-2.016px;">运行</span>
<div style="left:31px;top:587.5px;width:14px;height:12.5px;background:#dcdcdc;border:1px solid #cfcfcf;border-top:3px solid #c6c6c6;box-sizing:border-box;"></div>
<svg style="left:33px;top:591px;" width="10" height="8" viewBox="0 0 10 8"><path d="M4.4 0.6 V7.4 L0.4 4 Z" fill="#efaaa0"/><path d="M5.6 0.6 V7.4 L9.6 4 Z" fill="#a9d6a9"/></svg>
<span style="left:50.5px;top:586.0px;line-height:16px;font-size:12px;color:#505050;letter-spacing:-0.286px;">ComplexTest</span>
<svg style="left:1319px;top:587px;" width="13" height="13" viewBox="0 0 13 13"><line x1="10.00" y1="6.25" x2="12.50" y2="6.25" stroke="#808080" stroke-width="2.50"/><line x1="8.90" y1="8.90" x2="10.67" y2="10.67" stroke="#808080" stroke-width="2.50"/><line x1="6.25" y1="10.00" x2="6.25" y2="12.50" stroke="#808080" stroke-width="2.50"/><line x1="3.60" y1="8.90" x2="1.83" y2="10.67" stroke="#808080" stroke-width="2.50"/><line x1="2.50" y1="6.25" x2="0.00" y2="6.25" stroke="#808080" stroke-width="2.50"/><line x1="3.60" y1="3.60" x2="1.83" y2="1.83" stroke="#808080" stroke-width="2.50"/><line x1="6.25" y1="2.50" x2="6.25" y2="0.00" stroke="#808080" stroke-width="2.50"/><line x1="8.90" y1="3.60" x2="10.67" y2="1.83" stroke="#808080" stroke-width="2.50"/><circle cx="6.25" cy="6.25" r="3.50" fill="none" stroke="#808080" stroke-width="2.50"/></svg>
<svg style="left:1333px;top:592px;" width="6" height="3" viewBox="-0.5 0 6 3"><path d="M0 0 H5 L2.5 3 Z" fill="#808080"/></svg>
<svg style="left:1348px;top:587px;" width="12" height="13" viewBox="0 0 12 13"><path d="M4 0.4 V8" fill="none" stroke="#808080" stroke-width="1.1"/><path d="M1.2 5.4 H6.8 L4 8.6 Z" fill="#808080"/><rect x="0" y="9.6" width="11" height="2.8" fill="#808080"/><rect x="6" y="10.4" width="4.2" height="1.2" fill="#f4f4f4"/></svg>
<div style="left:0px;top:605px;width:1366px;height:1px;background:#a9a9a9;"></div>
<div style="left:27px;top:606px;width:1px;height:122px;background:#bdbdbd;"></div>
<svg style="left:8px;top:611px;" width="12" height="15" viewBox="0 0 12 15"><path d="M0.4 0.4 L11.6 7.5 L0.4 14.6 Z" fill="#36a84e"/></svg>
<svg style="left:5px;top:637px;" width="16" height="17" viewBox="0 0 16 17"><circle cx="9" cy="6.4" r="5.6" fill="#c8c8c8"/><path d="M0.6 5 L7.8 10 L0.6 15.2 Z" fill="#c2c2c2" stroke="#f2f2f2" stroke-width="0.8"/><path d="M9.4 3 V6.6" stroke="#dcdcdc" stroke-width="1.4"/></svg>
<svg style="left:5px;top:662px;" width="16" height="18" viewBox="0 0 16 18"><path d="M2.4 5.6 A6 6 0 0 1 11.6 2.6 L13 1 V6.4 H7.6 L9.4 4.6 A3.4 3.4 0 0 0 5 6.2 Z" fill="#3aa84e"/><path d="M13.6 11.6 A6 6 0 0 1 4.4 14.8 L3 16.4 V11 H8.4 L6.6 12.8 A3.4 3.4 0 0 0 11 11.2 Z" fill="#3aa84e"/><path d="M1.6 5.4 V12 H6 V7.4 M9.4 12.4 V5.6 H14 V12.4" stroke="#6a6a6a" stroke-width="1.5" fill="none"/></svg>
<div style="left:2px;top:687px;width:22px;height:1px;background:#c9c9c9;"></div>
<div style="left:7px;top:697px;width:12px;height:12px;background:#bdbdbd;"></div>
<div style="left:30px;top:607px;width:24px;height:22px;background:#dcdcdc;border:1px solid #c6c6c6;box-sizing:border-box;"></div>
<div style="left:56px;top:607px;width:24px;height:22px;background:#dcdcdc;border:1px solid #c6c6c6;box-sizing:border-box;"></div>
<svg style="left:34px;top:610px;" width="15" height="16" viewBox="0 -0.5 15 16"><circle cx="7.5" cy="7.5" r="6.3" fill="#d9f0d3" stroke="#56b257" stroke-width="1.4"/><path d="M4.2 7.6 L6.8 10.2 L10.9 5.2" fill="none" stroke="#4fae54" stroke-width="1.6"/></svg>
<svg style="left:60px;top:610px;" width="17" height="16" viewBox="-0.3 0 17 16"><circle cx="8" cy="8" r="6.4" fill="#f3dfbb" stroke="#e8a33d" stroke-width="1.3"/><path d="M0.4 4 H15.6 M0.4 6.6 H15.6 M0.4 9.4 H15.6 M0.4 12 H15.6" stroke="#8a6a30" stroke-width="0.7"/></svg>
<div style="left:85px;top:608px;width:1px;height:21px;background:#c9c9c9;"></div>
<svg style="left:93px;top:611px;" width="9" height="14" viewBox="0 0 9 14"><path d="M4.2 0.4 V12.6 M0.8 9 L4.2 12.8 L7.6 9" fill="none" stroke="#6e6e6e" stroke-width="1.3"/></svg>
<span style="left:101.5px;top:607.8px;line-height:11px;font-size:11px;color:#3b7fc4;">a</span>
<span style="left:101.8px;top:615.8px;line-height:11px;font-size:11px;color:#9a5fb5;">z</span>
<svg style="left:120px;top:611px;" width="17" height="14" viewBox="0 0 17 14"><path d="M4.2 0.4 V12.6 M0.8 9 L4.2 12.8 L7.6 9" fill="none" stroke="#6e6e6e" stroke-width="1.3"/><path d="M6.6 1.2 H15.4" stroke="#3b83c0" stroke-width="1.5"/><path d="M8.8 5 H15.4" stroke="#c08a3e" stroke-width="1.5"/><path d="M11 8.8 H15.4" stroke="#9a5fb5" stroke-width="1.5"/><path d="M13 12.4 H15.4" stroke="#36a84e" stroke-width="1.7"/></svg>
<div style="left:145px;top:608px;width:1px;height:21px;background:#c9c9c9;"></div>
<svg style="left:153px;top:611px;" width="15" height="14" viewBox="0 0 15 14"><path d="M0.5 0.8 H14.5 M0.5 13.2 H14.5" stroke="#6e6e6e" stroke-width="1.2"/><path d="M7.5 2.6 L11 6.2 H4 Z M7.5 11.4 L11 7.8 H4 Z" fill="#3b83c0"/></svg>
<svg style="left:181px;top:611px;" width="15" height="14" viewBox="0 0 15 14"><path d="M0.5 6 H14.5 M0.5 8.4 H14.5" stroke="#6e6e6e" stroke-width="1.1"/><path d="M7.5 4.6 L11 0.8 H4 Z M7.5 9.8 L11 13.6 H4 Z" fill="#3b83c0"/></svg>
<div style="left:205px;top:608px;width:1px;height:21px;background:#c9c9c9;"></div>
<svg style="left:214px;top:612px;" width="13" height="12" viewBox="0 0 13 12"><path d="M6.5 0.4 L12.6 6.6 H8.4 V11.8 H4.6 V6.6 H0.4 Z" fill="#c2c2c2"/></svg>
<svg style="left:241px;top:612px;" width="14" height="12" viewBox="-0.5 0 14 12"><path d="M6.5 11.8 L12.6 5.6 H8.4 V0.4 H4.6 V5.6 H0.4 Z" fill="#c2c2c2"/></svg>
<span style="left:283.5px;top:609.0px;line-height:16px;font-size:12px;color:#6e6e6e;letter-spacing:2.812px;">»</span>
<div style="left:304px;top:616.8px;width:434px;height:3.9px;background:#2fa866;"></div>
<span style="left:749px;top:608.5px;line-height:17px;font-size:13px;color:#1a1a1a;letter-spacing:-0.023px;">All 6 tests passed</span>
<span style="left:855.5px;top:608.5px;line-height:17px;font-size:13px;color:#808080;">- 5ms</span>
<div style="left:28px;top:631px;width:1311px;height:1px;background:#c4c4c4;"></div>
<div style="left:28px;top:632px;width:267px;height:96px;background:#ffffff;"></div>
<div style="left:28px;top:632px;width:267px;height:19px;background:#d4d4d4;"></div>
<svg style="left:33px;top:638px;" width="12" height="8" viewBox="-0.4 -0.6 12 8"><path d="M1 1.2 L5.4 5.6 L9.8 1.2" fill="none" stroke="#8a8a8a" stroke-width="1.7"/></svg>
<svg style="left:53px;top:634px;" width="16" height="16" viewBox="-0.3 -0.5 16 16"><circle cx="7.5" cy="7.5" r="6.3" fill="#d9f0d3" stroke="#56b257" stroke-width="1.4"/><path d="M4.2 7.6 L6.8 10.2 L10.9 5.2" fill="none" stroke="#4fae54" stroke-width="1.6"/></svg>
<span style="left:72.3px;top:633.0px;line-height:17px;font-size:13px;letter-spacing:-0.084px;">ComplexTest</span>
<span style="left:272px;top:633.5px;line-height:16px;font-size:12px;color:#f5f5f5;letter-spacing:-0.586px;">5ms</span>
<svg style="left:73px;top:653px;" width="16" height="16" viewBox="-0.2 -0.5 16 16"><circle cx="7.5" cy="7.5" r="6.3" fill="#d9f0d3" stroke="#56b257" stroke-width="1.4"/><path d="M4.2 7.6 L6.8 10.2 L10.9 5.2" fill="none" stroke="#4fae54" stroke-width="1.6"/></svg>
<span style="left:92.5px;top:652.0px;line-height:17px;font-size:13px;letter-spacing:0.089px;">addComplex</span>
<span style="left:272px;top:652.5px;line-height:16px;font-size:12px;color:#7e7e7e;letter-spacing:-0.586px;">5ms</span>
<svg style="left:73px;top:672px;" width="16" height="16" viewBox="-0.2 -0.5 16 16"><circle cx="7.5" cy="7.5" r="6.3" fill="#d9f0d3" stroke="#56b257" stroke-width="1.4"/><path d="M4.2 7.6 L6.8 10.2 L10.9 5.2" fill="none" stroke="#4fae54" stroke-width="1.6"/></svg>
<span style="left:92.5px;top:671.0px;line-height:17px;font-size:13px;letter-spacing:-0.047px;">divComplex</span>
<span style="left:272px;top:671.5px;line-height:16px;font-size:12px;color:#7e7e7e;letter-spacing:-0.586px;">0ms</span>
<svg style="left:73px;top:691px;" width="16" height="16" viewBox="-0.2 -0.5 16 16"><circle cx="7.5" cy="7.5" r="6.3" fill="#d9f0d3" stroke="#56b257" stroke-width="1.4"/><path d="M4.2 7.6 L6.8 10.2 L10.9 5.2" fill="none" stroke="#4fae54" stroke-width="1.6"/></svg>
<span style="left:92.5px;top:690.0px;line-height:17px;font-size:13px;letter-spacing:0.263px;">getImagepart</span>
<span style="left:272px;top:690.5px;line-height:16px;font-size:12px;color:#7e7e7e;letter-spacing:-0.586px;">0ms</span>
<svg style="left:73px;top:710px;" width="16" height="16" viewBox="-0.2 -0.5 16 16"><circle cx="7.5" cy="7.5" r="6.3" fill="#d9f0d3" stroke="#56b257" stroke-width="1.4"/><path d="M4.2 7.6 L6.8 10.2 L10.9 5.2" fill="none" stroke="#4fae54" stroke-width="1.6"/></svg>
<span style="left:92.5px;top:709.0px;line-height:17px;font-size:13px;letter-spacing:-0.085px;">subComplex</span>
<span style="left:272px;top:709.5px;line-height:16px;font-size:12px;color:#7e7e7e;letter-spacing:-0.586px;">0ms</span>
<div style="left:285px;top:631px;width:10px;height:97px;background:rgba(190,190,190,0.45);"></div>
<div style="left:295px;top:631px;width:1px;height:97px;background:#c4c4c4;"></div>
<div style="left:296px;top:632px;width:1042px;height:96px;background:#ffffff;"></div>
<div style="left:310px;top:633px;width:343px;height:18px;background:#eef8ec;"></div>
<span class="c" style="left:310px;top:634.5px;line-height:19px;font-size:11px;transform:scaleX(1.0606);color:#6a6a6a;font-weight:700;">"C:\Program Files\Java\jdk1.8.0_162\bin\java" ...</span>
<span style="left:310px;top:673.5px;line-height:16px;font-size:12px;color:#00007f;font-family:"Liberation Mono","Noto Sans CJK SC",monospace;letter-spacing:-0.241px;">进程已结束,退出代码0</span>
<div style="left:1338px;top:631px;width:1px;height:97px;background:#c4c4c4;"></div>
<svg style="left:1345px;top:638px;" width="13" height="12" viewBox="0 0 13 12"><path d="M6.5 0.4 L12.6 6.6 H8.4 V11.8 H4.6 V6.6 H0.4 Z" fill="#c2c2c2"/></svg>
<svg style="left:1345px;top:664px;" width="13" height="12" viewBox="0 0 13 12"><path d="M6.5 11.8 L12.6 5.6 H8.4 V0.4 H4.6 V5.6 H0.4 Z" fill="#c2c2c2"/></svg>
<svg style="left:1344px;top:688px;" width="17" height="16" viewBox="0 0 17 16"><path d="M1 1.4 H12 M1 7.6 H5 M1 13.8 H9" stroke="#555" stroke-width="1.1"/><path d="M13.4 1 V4.4 H4.4 M6.6 2.4 L4.2 4.4 L6.6 6.6" fill="none" stroke="#2f7fc0" stroke-width="1.3"/><path d="M6.6 7.6 H13.6 V11 H11 M13 9 L10.6 11 L13 13.2" fill="none" stroke="#2f7fc0" stroke-width="1.3"/></svg>
<div style="left:0px;top:728px;width:1366px;height:40px;background:#242424;"></div>
<div style="left:392px;top:745px;width:974px;height:1px;background:rgba(0,0,0,0.5);"></div>
<div style="left:27px;top:728px;width:1px;height:18px;background:#111;"></div>
<span style="left:9px;top:731.5px;line-height:15px;font-size:11px;color:#3d3d3d;">»</span>
<svg style="left:9px;top:751px;" width="15" height="13" viewBox="0 0 15 13"><rect x="0.5" y="0.5" width="13" height="11" fill="none" stroke="#0f0f0f" stroke-width="1"/><path d="M0 12.6 H14" stroke="#0f0f0f"/></svg>
<span style="left:32px;top:749.0px;line-height:16px;font-size:12px;color:#0c0c0c;">测试</span>
<span style="left:1077px;top:749.0px;line-height:16px;font-size:12px;color:#0e0e0e;letter-spacing:-0.508px;">13:19</span>
<span style="left:1118px;top:749.0px;line-height:16px;font-size:12px;color:#0e0e0e;letter-spacing:-0.980px;">CRLF÷</span>
<span style="left:1163px;top:749.0px;line-height:16px;font-size:12px;color:#0e0e0e;letter-spacing:-0.719px;">UTF-8÷</span>
<span style="left:1213px;top:749.0px;line-height:16px;font-size:12px;color:#0e0e0e;letter-spacing:-0.169px;">Git: master</span>
<svg style="left:15px;top:740px;" width="18" height="17" viewBox="-0.635 0 19.059 17.622"><path d="M0 2.4 L7.4 1.3 V8 H0 Z M8.4 1.2 L17.4 0 V8 H8.4 Z M0 9 H7.4 V15.6 L0 14.6 Z M8.4 9 H17.4 V17 L8.4 15.7 Z" fill="#fff"/></svg>
<div style="left:48px;top:728px;width:344px;height:40px;background:#f3f3f3;"></div>
<div style="left:48px;top:728px;width:304px;height:1px;background:#b8b8b8;"></div>
<div style="left:352px;top:728px;width:40px;height:1px;background:#dedede;"></div>
<svg style="left:56px;top:736px;" width="24" height="24" viewBox="0 0 24 24"><circle cx="12" cy="12" r="9.6" fill="none" stroke="#111" stroke-width="2.6"/></svg>
<span style="left:88.5px;top:738.5px;line-height:20px;font-size:14px;color:#1f1f1f;letter-spacing:-0.045px;">在这里输入你要搜索的内容</span>
<svg style="left:366px;top:740px;" width="11" height="17" viewBox="0 0 11 18.434"><rect x="2.6" y="0.6" width="5.8" height="10.4" rx="2.9" fill="none" stroke="#222" stroke-width="1.2"/><path d="M0.6 8 v1 a4.9 4.9 0 0 0 9.8 0 v-1 M5.5 14 V17.4" fill="none" stroke="#222" stroke-width="1.2"/></svg>
<svg style="left:405px;top:741px;" width="22" height="14" viewBox="0 0 22 14"><rect x="4.6" y="0.6" width="12.8" height="12.8" fill="none" stroke="#fff" stroke-width="1.2"/><path d="M2.6 2.6 H0.6 V11.4 H2.6 M19.4 2.6 H21.4 V11.4 H19.4" fill="none" stroke="#fff" stroke-width="1.2"/></svg>
<svg style="left:455px;top:737px;" width="23" height="23" viewBox="-0.4 -0.3 23 23"><g fill="#e8e8e8"><circle cx="5.9" cy="5.9" r="5.8"/><circle cx="16.1" cy="5.9" r="5.8"/><circle cx="16.1" cy="16.1" r="5.8"/><circle cx="5.9" cy="16.1" r="5.8"/><rect x="8" y="8" width="6" height="6"/></g><path d="M9.6 1.4 Q7.4 7 11 11 Q14.6 15 12.4 20.6 M1.4 12.4 Q7 14.6 11 11 Q15 7.4 20.6 9.6" fill="none" stroke="#262626" stroke-width="0.9"/></svg>
<svg style="left:506px;top:736px;" width="25" height="25" viewBox="0 0 25 25"><path d="M21.6 15.6 A8.2 8.2 0 1 1 21.9 12.2 H9" fill="none" stroke="#ececec" stroke-width="3.4"/><path d="M3.2 23.4 C-1.5 17 9 3.5 19.6 1.4 C23.6 0.8 23 4.4 21.6 6" fill="none" stroke="#ececec" stroke-width="1.3"/><path d="M3.2 23.4 C6 24.6 9 22.6 11 21" fill="none" stroke="#ececec" stroke-width="1.3"/></svg>
<div style="left:549px;top:728px;width:48px;height:40px;background:#a8612c;"></div>
<div style="left:593px;top:728px;width:4px;height:38px;background:#9c5826;"></div>
<div style="left:549px;top:766px;width:48px;height:2px;background:#f57a0a;"></div>
<svg style="left:561px;top:736px;" width="25" height="25" viewBox="0 0 25 25"><circle cx="12.4" cy="12.2" r="11" fill="#e9f6e2"/><circle cx="12.4" cy="12.2" r="10" fill="#4cba2c"/><path d="M18.8 14.4 A6 6 0 1 1 19 11.4 H9.6" fill="none" stroke="#fff" stroke-width="2.8"/><path d="M3 21.6 C1 15 9 5 20 1.6" fill="none" stroke="#3fae28" stroke-width="1.6"/><path d="M4.4 20 C4 15 9 7.4 17.6 3.4" fill="none" stroke="#e9f6e2" stroke-width="1"/></svg>
<svg style="left:611px;top:738px;" width="22" height="20" viewBox="0 -0.6 22 20"><path d="M0 1.4 H8.8 L10.2 3 H21.6 V17.8 H0 Z" fill="#ffe692"/><rect x="0.8" y="0.6" width="8" height="2.2" rx="0.6" fill="#f5c443"/><rect x="1.6" y="1.2" width="3.4" height="1" fill="#fff3c4"/><path d="M4.2 10.4 H17.8 V18.6 H14.4 V13.6 H7.6 V18.6 H4.2 Z" fill="#35b1ef"/><rect x="7.6" y="17.8" width="6.8" height="1.2" fill="#222"/></svg>
<svg style="left:660px;top:736px;" width="22" height="24" viewBox="0 -0.6 22 24"><rect x="12" y="3.6" width="9.6" height="15.4" fill="#fff" stroke="#d24726" stroke-width="0.9"/><circle cx="16.4" cy="8" r="2.6" fill="#d24726"/><path d="M16.4 8 V5 A3 3 0 0 1 19.4 8 Z" fill="#fff" stroke="#d24726" stroke-width="0.5"/><path d="M14 13 H20 M14 15.6 H20" stroke="#d24726" stroke-width="1.2"/><path d="M0 2.4 L13 0 V22.4 L0 20 Z" fill="#d24726"/></svg>
<span style="left:663.2px;top:740.0px;line-height:16px;font-size:12px;color:#fff;font-weight:700;">P</span>
<svg style="left:708px;top:736px;" width="24" height="24" viewBox="-0.8 -0.6 24 24"><rect x="12" y="3" width="10" height="16.4" fill="#fff" stroke="#2b579a" stroke-width="0.9"/><path d="M14 6 H20.6 M14 8.4 H20.6 M14 10.8 H20.6 M14 13.2 H20.6 M14 15.6 H20.6" stroke="#2b579a" stroke-width="1"/><path d="M0 2.4 L13 0 V22.4 L0 20 Z" fill="#2b579a"/></svg>
<span style="left:710.6px;top:740.5px;line-height:15px;font-size:11px;color:#fff;font-weight:700;letter-spacing:0.609px;">W</span>
<svg style="left:756px;top:737px;" width="26" height="21" viewBox="0 0 26 21"><path d="M1 6.8 L12.9 0.5 L25 6.8 V20 H1 Z" fill="#fff"/><path d="M2.4 7.4 H24 L15.2 12.4 L20.2 17 L14 13.4 Z" fill="#1c1c1c"/></svg>
<div style="left:794px;top:728px;width:48px;height:40px;background:#4f4f4f;"></div>
<div style="left:794px;top:745px;width:48px;height:1px;background:rgba(0,0,0,0.12);"></div>
<div style="left:794px;top:766px;width:48px;height:2px;background:#76b9ed;"></div>
<svg style="left:808px;top:738px;" width="20" height="20" viewBox="0 0 20 20"><defs><linearGradient id="ijg2" x1="0" y1="0" x2="1" y2="0"><stop offset="0" stop-color="#f03e6a"/><stop offset="0.45" stop-color="#8a46c8"/><stop offset="1" stop-color="#1673ee"/></linearGradient><linearGradient id="ijg3" x1="0" y1="0" x2="0" y2="1"><stop offset="0" stop-color="#f03e6a"/><stop offset="0.5" stop-color="#e07b28"/><stop offset="1" stop-color="#a041b0"/></linearGradient></defs><rect width="20" height="20" fill="url(#ijg2)"/><rect width="4" height="20" fill="url(#ijg3)"/><rect x="2.8" y="2.8" width="14.2" height="14.2" fill="#0c0c0c"/><rect x="4" y="14.2" width="6" height="1.5" fill="#fff"/></svg>
<span style="left:811.6px;top:741.2px;line-height:10px;font-size:9.5px;color:#fff;font-weight:700;font-family:"Liberation Mono","Noto Sans CJK SC",monospace;letter-spacing:-2.406px;">IJ</span>
<svg style="left:994px;top:737px;" width="46" height="22" viewBox="0 0 46 22"><rect x="1.4" y="1" width="40" height="20.6" rx="1.5" fill="#1a1a1a" stroke="#fff" stroke-width="1.6"/><rect x="42" y="7" width="3.6" height="9" rx="1" fill="#fff"/><rect x="3.4" y="3" width="16.4" height="16.6" fill="#1f9a47"/></svg>
<span style="left:1002.5px;top:740.0px;line-height:17px;font-size:13px;color:#fff;letter-spacing:-0.266px;">47%</span>
<svg style="left:1067px;top:740px;" width="16" height="16" viewBox="0 0 16 16"><circle cx="5.4" cy="7" r="2.8" fill="none" stroke="#fff" stroke-width="1.2"/><path d="M0.6 15.4 C1 10 9.6 10 10.2 15.4" fill="none" stroke="#fff" stroke-width="1.2"/><circle cx="11.4" cy="3.4" r="2.4" fill="none" stroke="#fff" stroke-width="1.2"/><path d="M10.4 7.4 C13 6.6 15 8 15.4 10.4" fill="none" stroke="#fff" stroke-width="1.2"/></svg>
<svg style="left:1103px;top:743px;" width="14" height="9" viewBox="0 0 14 9"><path d="M0.8 8 L7 1.4 L13.2 8" fill="none" stroke="#fff" stroke-width="1.3"/></svg>
<svg style="left:1127px;top:741px;" width="15" height="14" viewBox="0 0 15 14"><path d="M0.6 4.6 H3.4 L7 1 V13 L3.4 9.4 H0.6 Z" fill="none" stroke="#fff" stroke-width="1.1"/><path d="M9.6 5 L13.6 9 M13.6 5 L9.6 9" stroke="#fff" stroke-width="1.1"/></svg>
<span style="left:1150px;top:739.5px;line-height:18px;font-size:14px;color:#fff;font-weight:700;letter-spacing:0.500px;">英</span>
<svg style="left:1178px;top:739px;" width="18" height="18" viewBox="0 0 18 18"><rect x="0" y="1" width="18" height="16" rx="4" fill="#f0601e" transform="rotate(-8 9 9)"/></svg>
<span style="left:1182px;top:739.5px;line-height:18px;font-size:14px;color:#fff;font-weight:700;font-style:italic;">S</span>
<svg style="left:1211px;top:737px;" width="23" height="24" viewBox="0 -0.2 23 24"><circle cx="11.1" cy="11.2" r="11" fill="#18c45c"/><path d="M3.4 5.4 A9.6 9.6 0 0 1 18.8 5.4 Z" fill="#242424"/><path d="M2.6 6.4 A10 10 0 0 1 19.6 6.4" fill="none" stroke="#18c45c" stroke-width="1.4"/></svg>
<span style="left:1215.2px;top:741.5px;line-height:16px;font-size:12px;color:#fff;letter-spacing:0.041px;">78</span>
<span style="left:1261.5px;top:731.05px;line-height:16.5px;font-size:12.5px;color:#fff;letter-spacing:-0.320px;">19:57</span>
<span style="left:1248px;top:749.75px;line-height:16.5px;font-size:12.5px;color:#fff;letter-spacing:0.236px;">2018/4/22</span>
<span style="left:1349px;top:730.0px;line-height:16px;font-size:12px;color:#111;">»</span>
<div style="left:1338px;top:728px;width:1px;height:17px;background:#161616;"></div>
<div style="left:1361px;top:728px;width:1px;height:40px;background:#777;"></div>
<svg style="left:1325px;top:740px;" width="18" height="15" viewBox="-0.2 -0.4 18 15"><path d="M0 0 H15.8 V10.4 H8 L5 13.6 V10.4 H0 Z" fill="#fff"/><path d="M2.6 2.6 H13.2 M2.6 5 H13.2 M2.6 7.4 H13.2" stroke="#242424" stroke-width="1"/></svg>
<svg style="left:1332px;top:746px;" width="17" height="18" viewBox="0 -0.4 17 18"><circle cx="8.4" cy="8.4" r="7.6" fill="#2c2c2c" stroke="#8c8c8c" stroke-width="1"/></svg>
<span style="left:1337px;top:747.0px;line-height:16px;font-size:12px;color:#fff;font-weight:700;">3</span>
</div></body></html>
